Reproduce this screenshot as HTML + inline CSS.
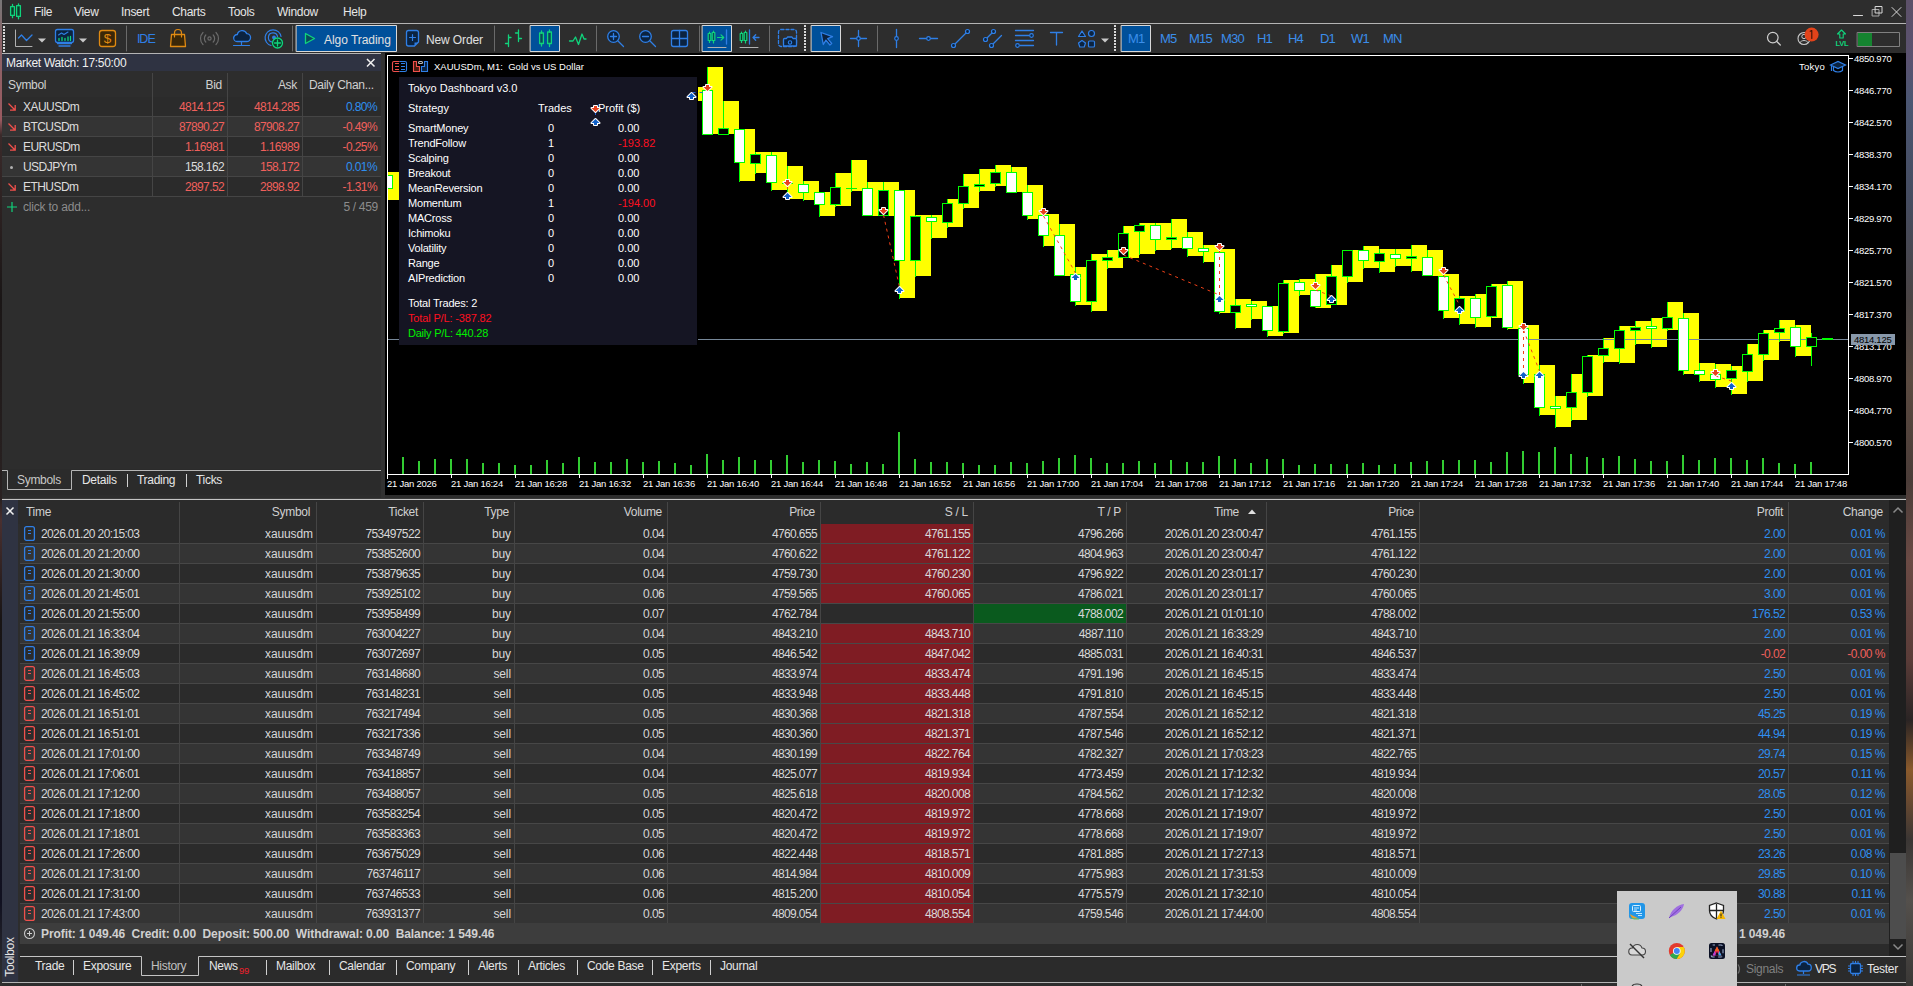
<!DOCTYPE html><html><head><meta charset="utf-8"><title>MT5</title><style>
*{box-sizing:border-box;margin:0;padding:0}
html,body{width:1913px;height:986px;overflow:hidden;background:#2d2d2d}
body{position:relative;font-family:"Liberation Sans",sans-serif;font-size:12px;color:#dcdcdc;line-height:14px}
.a{position:absolute}
.t{position:absolute;white-space:nowrap;line-height:14px;height:14px;letter-spacing:-0.45px}
.r{text-align:right}
svg{position:absolute;overflow:visible}
.blue{color:#3b8eea}
.red{color:#f05a5a}
</style></head><body>
<div class="a" style="left:0;top:0;width:2px;height:986px;background:linear-gradient(#777 0,#8a6468 40px,#9a5a60 120px,#3a2a2a 135px,#1a1616 300px,#2a2222 500px,#4a3030 520px,#181414 620px,#101020 900px,#303030 986px)"></div>
<div class="a" style="left:1906px;top:0;width:7px;height:986px;background:linear-gradient(#5c5068 0,#5a5270 60px,#4b5672 100px,#454c60 200px,#4a4444 300px,#5a4a40 380px,#4a3c38 480px,#6a4a44 560px,#5a3c38 660px,#2a2424 720px,#8a5a2c 770px,#6a4a30 800px,#3a3634 840px,#54504c 900px,#3a3836 986px)"></div>
<div class="a" style="left:2px;top:0px;width:1904px;height:23px;background:#2d2d2d;"></div>
<div class="a" style="left:2px;top:23px;width:1904px;height:1px;background:#b4b4b4;"></div>
<div class="a" style="left:2px;top:24px;width:1904px;height:29px;background:#2d2d2d;"></div>
<div class="a" style="left:2px;top:53px;width:379px;height:1px;background:#b4b4b4;"></div>
<div class="a" style="left:381px;top:53px;width:4px;height:1px;background:#323232;"></div>
<div class="t " style="left:34px;top:5px;color:#e6e6e6;font-size:12px;letter-spacing:-0.3px">File</div>
<div class="t " style="left:74px;top:5px;color:#e6e6e6;font-size:12px;letter-spacing:-0.3px">View</div>
<div class="t " style="left:121px;top:5px;color:#e6e6e6;font-size:12px;letter-spacing:-0.3px">Insert</div>
<div class="t " style="left:172px;top:5px;color:#e6e6e6;font-size:12px;letter-spacing:-0.3px">Charts</div>
<div class="t " style="left:228px;top:5px;color:#e6e6e6;font-size:12px;letter-spacing:-0.3px">Tools</div>
<div class="t " style="left:277px;top:5px;color:#e6e6e6;font-size:12px;letter-spacing:-0.3px">Window</div>
<div class="t " style="left:343px;top:5px;color:#e6e6e6;font-size:12px;letter-spacing:-0.3px">Help</div>
<svg width="1913" height="56" viewBox="0 0 1913 56" style="left:0;top:0" fill="none" stroke-linecap="round" stroke-linejoin="round"><g stroke="#10d47c" stroke-width="1.3"><rect x="10.6" y="6.6" width="3.8" height="8.8" fill="#0c3a28"/><path d="M12.5 4.5v2M12.5 15.5v2.2"/><rect x="16.6" y="5.6" width="3.8" height="10.8" fill="#0c3a28"/><path d="M18.5 3.8v1.8M18.5 16.5v2.3"/></g><g stroke="#d8d8d8" stroke-width="1"><path d="M1853.5 15.5h9"/><rect x="1872.5" y="9.5" width="6.5" height="6.5" stroke="#a8a8a8"/><rect x="1875.5" y="6.5" width="6.5" height="6.5"/><path d="M1892 7.5l9 9M1901 7.5l-9 9"/></g><rect x="3" y="26" width="2" height="2" fill="#d8d8d8" stroke="none" shape-rendering="crispEdges"/><rect x="3" y="29" width="2" height="2" fill="#d8d8d8" stroke="none" shape-rendering="crispEdges"/><rect x="3" y="32" width="2" height="2" fill="#d8d8d8" stroke="none" shape-rendering="crispEdges"/><rect x="3" y="35" width="2" height="2" fill="#d8d8d8" stroke="none" shape-rendering="crispEdges"/><rect x="3" y="38" width="2" height="2" fill="#d8d8d8" stroke="none" shape-rendering="crispEdges"/><rect x="3" y="41" width="2" height="2" fill="#d8d8d8" stroke="none" shape-rendering="crispEdges"/><rect x="3" y="44" width="2" height="2" fill="#d8d8d8" stroke="none" shape-rendering="crispEdges"/><rect x="3" y="47" width="2" height="2" fill="#d8d8d8" stroke="none" shape-rendering="crispEdges"/><rect x="3" y="50" width="2" height="2" fill="#d8d8d8" stroke="none" shape-rendering="crispEdges"/><rect x="804" y="25" width="2" height="2" fill="#d8d8d8" stroke="none" shape-rendering="crispEdges"/><rect x="804" y="28" width="2" height="2" fill="#d8d8d8" stroke="none" shape-rendering="crispEdges"/><rect x="804" y="31" width="2" height="2" fill="#d8d8d8" stroke="none" shape-rendering="crispEdges"/><rect x="804" y="34" width="2" height="2" fill="#d8d8d8" stroke="none" shape-rendering="crispEdges"/><rect x="804" y="37" width="2" height="2" fill="#d8d8d8" stroke="none" shape-rendering="crispEdges"/><rect x="804" y="40" width="2" height="2" fill="#d8d8d8" stroke="none" shape-rendering="crispEdges"/><rect x="804" y="43" width="2" height="2" fill="#d8d8d8" stroke="none" shape-rendering="crispEdges"/><rect x="804" y="46" width="2" height="2" fill="#d8d8d8" stroke="none" shape-rendering="crispEdges"/><rect x="804" y="49" width="2" height="2" fill="#d8d8d8" stroke="none" shape-rendering="crispEdges"/><rect x="1114" y="25" width="2" height="2" fill="#d8d8d8" stroke="none" shape-rendering="crispEdges"/><rect x="1114" y="28" width="2" height="2" fill="#d8d8d8" stroke="none" shape-rendering="crispEdges"/><rect x="1114" y="31" width="2" height="2" fill="#d8d8d8" stroke="none" shape-rendering="crispEdges"/><rect x="1114" y="34" width="2" height="2" fill="#d8d8d8" stroke="none" shape-rendering="crispEdges"/><rect x="1114" y="37" width="2" height="2" fill="#d8d8d8" stroke="none" shape-rendering="crispEdges"/><rect x="1114" y="40" width="2" height="2" fill="#d8d8d8" stroke="none" shape-rendering="crispEdges"/><rect x="1114" y="43" width="2" height="2" fill="#d8d8d8" stroke="none" shape-rendering="crispEdges"/><rect x="1114" y="46" width="2" height="2" fill="#d8d8d8" stroke="none" shape-rendering="crispEdges"/><rect x="1114" y="49" width="2" height="2" fill="#d8d8d8" stroke="none" shape-rendering="crispEdges"/><path d="M126.5 26v25" stroke="#6a6a6a" stroke-width="1"/><path d="M292.5 26v25" stroke="#6a6a6a" stroke-width="1"/><path d="M494.5 26v25" stroke="#6a6a6a" stroke-width="1"/><path d="M596.5 26v25" stroke="#6a6a6a" stroke-width="1"/><path d="M699.5 26v25" stroke="#6a6a6a" stroke-width="1"/><path d="M769.5 26v25" stroke="#6a6a6a" stroke-width="1"/><path d="M877.5 26v25" stroke="#6a6a6a" stroke-width="1"/><path d="M15.5 30v16.5h16.5" stroke="#b0b0b0" stroke-width="1"/><path d="M18.5 38l3-3 5 5.5 5.5-5.5" stroke="#2f7fe6" stroke-width="1.3"/><path d="M38 38.5h8l-4 4z" fill="#c8c8c8" stroke="none"/><rect x="55.5" y="29.5" width="18" height="13" rx="2" stroke="#2f7fe6" stroke-width="1.3" fill="#0b2340"/><path d="M57.5 43.5h14M59 46h11" stroke="#2f7fe6" stroke-width="1.3"/><path d="M58.5 35l3-2 2.500 1.500 4-2.500" stroke="#2f7fe6" stroke-width="1.1"/><path d="M59 40.500v-2M62 40.500v-3M65 40.500v-2M68 40.500v-3.500M70.500 40.500v-4" stroke="#10d47c" stroke-width="1.3"/><path d="M79 38.500h8l-4 4z" fill="#c8c8c8" stroke="none"/><rect x="99.500" y="30.500" width="16" height="16" rx="2.500" stroke="#e08a12" stroke-width="1.3" fill="#3a2708"/><text x="107.500" y="43.300" font-family="Liberation Sans" font-size="13.500" fill="#e08a12" stroke="none" text-anchor="middle">$</text><text x="145.800" y="43" font-family="Liberation Sans" font-size="12.500" fill="#2f7fe6" stroke="none" text-anchor="middle" letter-spacing="-1">IDE</text><path d="M171.500 34.500h13l1 12h-15z" stroke="#e08a12" stroke-width="1.3" fill="#3a2708"/><path d="M174.500 37v-4a3.500 3.500 0 0 1 7 0v4" stroke="#e08a12" stroke-width="1.2"/><g stroke="#6a6a6a" stroke-width="1.2"><circle cx="209.500" cy="38.500" r="1.600"/><path d="M205.800 35a5 5 0 0 0 0 7M213.200 35a5 5 0 0 1 0 7M203 32.500a8.500 8.500 0 0 0 0 12M216 32.500a8.500 8.500 0 0 1 0 12"/></g><path d="M237 41.500a3.500 3.500 0 0 1 .3-7a5 5 0 0 1 9.500-.8a3.900 3.900 0 0 1-.3 7.800z" stroke="#2f7fe6" stroke-width="1.3" fill="#0b2340"/><path d="M241.500 41.500v3M233.500 45.500h16" stroke="#2f7fe6" stroke-width="1.2"/><g stroke="#2f7fe6" stroke-width="1.2"><path d="M271 45.500a8 8 0 1 1 10-9"/><path d="M272 42a4.600 4.600 0 1 1 5.500-5.500"/><circle cx="274" cy="37.500" r="1.300" fill="#2f7fe6"/></g><circle cx="277.500" cy="43" r="5" fill="#0c3a28" stroke="#10d47c" stroke-width="1.3"/><path d="M277.500 40v6M274.500 43h6" stroke="#10d47c" stroke-width="1.3"/><rect x="296.500" y="25.500" width="100" height="26" fill="#00509a" stroke="#d8d8d8" stroke-width="1"/><path d="M305.500 33.500l9 5-9 5z" stroke="#10d47c" stroke-width="1.3" fill="#0a4a5a"/><path d="M408.500 30.500h8a2 2 0 0 1 2 2v9.500l-4 4h-6a2 2 0 0 1-2-2v-11.500a2 2 0 0 1 2-2z" stroke="#2f7fe6" stroke-width="1.3" fill="#0b2340"/><path d="M412.500 34.500v6M409.500 37.500h6" stroke="#2f7fe6" stroke-width="1.2"/><path d="M418 42.500l-3.500 3.500v-3.500z" fill="#2f7fe6" stroke="none"/><path d="M508.500 35v11.500M505.500 43.500h3M508.500 37.500h2.500M518.500 30v11.500M515.500 33h3M518.500 38.500h3" stroke="#10d47c" stroke-width="1.3"/><rect x="530.500" y="25.500" width="29" height="26" fill="#00509a" stroke="#d8d8d8" stroke-width="1"/><g stroke="#10d47c" stroke-width="1.3"><rect x="539.600" y="33" width="3.800" height="10.500" fill="#0a4a5a"/><path d="M541.500 31v2M541.500 43.500v2.500"/><rect x="547.600" y="32" width="3.800" height="11.500" fill="#0a4a5a"/><path d="M549.500 30v2M549.500 43.500v3"/></g><path d="M569.500 41h3.500l2.500-4 3 7.500 3.500-10.500 2 5h2" stroke="#10d47c" stroke-width="1.3"/><g stroke="#2f7fe6" stroke-width="1.3"><circle cx="613.500" cy="36.500" r="5.800" fill="#0b2340"/><path d="M618 41l5.500 5.500M610.500 36.500h6M613.500 33.500v6"/></g><g stroke="#2f7fe6" stroke-width="1.3"><circle cx="645.500" cy="36.500" r="5.800" fill="#0b2340"/><path d="M650 41l5.500 5.500M642.500 36.500h6"/></g><g stroke="#2f7fe6" stroke-width="1.3"><rect x="671.500" y="30.500" width="16" height="16" rx="2" fill="#0b2340"/><path d="M679.500 30.500v16M671.500 38.500h16"/></g><rect x="702.500" y="25.500" width="29" height="26" fill="#00509a" stroke="#d8d8d8" stroke-width="1"/><g stroke="#10d47c" stroke-width="1.2"><rect x="708.200" y="33.500" width="2.600" height="7" fill="#0a4a5a"/><path d="M709.500 32v1.500M709.500 40.500v2"/><rect x="712.200" y="32.500" width="2.600" height="8" fill="#0a4a5a"/><path d="M713.500 31v1.500M713.500 40.500v2.500"/><path d="M717.500 37.500h6M721 34.800l2.700 2.700-2.700 2.700"/></g><path d="M726.500 30v14" stroke="#2f7fe6" stroke-width="1.3"/><path d="M708 47.500h18" stroke="#b0b0b0" stroke-width="1"/><g stroke="#10d47c" stroke-width="1.2"><rect x="740.200" y="33.500" width="2.600" height="7" fill="#0c3a28"/><path d="M741.500 32v1.500M741.500 40.500v2"/><rect x="744.200" y="32.500" width="2.600" height="8" fill="#0c3a28"/><path d="M745.500 31v1.500M745.500 40.500v2.500"/></g><path d="M749.500 30v14M753 37.500h6M755.700 34.800l-2.700 2.700 2.700 2.700" stroke="#2f7fe6" stroke-width="1.3"/><path d="M740 47.500h18" stroke="#b0b0b0" stroke-width="1"/><rect x="778.500" y="29.500" width="18" height="17" rx="2.500" stroke="#2f7fe6" stroke-width="1.3" stroke-dasharray="3 2"/><path d="M784.500 38.500h2l1-1.500h4.500l1 1.500h2.500a1 1 0 0 1 1 1v6.500h-13v-6.500a1 1 0 0 1 1-1z" stroke="#2f7fe6" stroke-width="1.3" fill="#0b2340"/><circle cx="790" cy="42.500" r="1.700" stroke="#2f7fe6" stroke-width="1.1"/><rect x="811.500" y="25.500" width="29" height="26" fill="#00509a" stroke="#d8d8d8" stroke-width="1"/><path d="M821 32.500l11.500 4.200-4.800 2 4 4.800-1.800 1.500-4-4.800-2.600 4.300z" stroke="#2f7fe6" stroke-width="1.3" fill="#0b2340"/><path d="M858.500 30.500v16M850.500 38.500h16" stroke="#2f7fe6" stroke-width="1.3"/><circle cx="858.500" cy="38.500" r="1.800" stroke="#2f7fe6" stroke-width="1.2" fill="#0b2340"/><path d="M896.500 29.500v18" stroke="#2f7fe6" stroke-width="1.3"/><circle cx="896.500" cy="38.500" r="1.800" stroke="#2f7fe6" stroke-width="1.2" fill="#0b2340"/><path d="M919.500 38.500h18" stroke="#2f7fe6" stroke-width="1.3"/><circle cx="928.500" cy="38.500" r="1.800" stroke="#2f7fe6" stroke-width="1.2" fill="#0b2340"/><path d="M954.500 44.500l12.500-12.500" stroke="#2f7fe6" stroke-width="1.3"/><circle cx="953.500" cy="45.500" r="2" stroke="#2f7fe6" stroke-width="1.2" fill="#0b2340"/><circle cx="967.500" cy="31.500" r="2" stroke="#2f7fe6" stroke-width="1.2" fill="#0b2340"/><path d="M986.500 38.500l6.500-6.500M992.500 44.500l9-9" stroke="#2f7fe6" stroke-width="1.3"/><circle cx="985.500" cy="39.500" r="2" stroke="#2f7fe6" stroke-width="1.2" fill="#0b2340"/><circle cx="993.500" cy="31.500" r="2" stroke="#2f7fe6" stroke-width="1.2" fill="#0b2340"/><circle cx="991.500" cy="45.500" r="2" stroke="#2f7fe6" stroke-width="1.2" fill="#0b2340"/><path d="M1015.500 30.500h18M1015.500 35.500h14M1015.500 40.500h18M1020 45.500h13.500" stroke="#2f7fe6" stroke-width="1.3"/><circle cx="1031.500" cy="35.500" r="1.800" stroke="#2f7fe6" stroke-width="1.2" fill="#0b2340"/><circle cx="1017.500" cy="45.500" r="1.800" stroke="#2f7fe6" stroke-width="1.2" fill="#0b2340"/><path d="M1050.500 32.500h12M1056.500 32.500v12.500" stroke="#2f7fe6" stroke-width="1.3"/><g stroke="#2f7fe6" stroke-width="1.2" fill="#0b2340"><path d="M1082 31l3.500 5.500h-7z"/><circle cx="1091.500" cy="33.500" r="3"/><path d="M1082 40.500l3.500 2.500-1.300 4h-4.400l-1.300-4z"/><rect x="1088.500" y="41" width="6" height="6" rx="1"/></g><path d="M1101 38.500h8l-4 4z" fill="#c8c8c8" stroke="none"/><rect x="1121.500" y="25.500" width="29" height="26" fill="#00509a" stroke="#d8d8d8" stroke-width="1"/><circle cx="1772.800" cy="37.600" r="5.300" stroke="#d0d0d0" stroke-width="1.2"/><path d="M1776.800 41.500l3.500 3.500" stroke="#d0d0d0" stroke-width="1.2"/><circle cx="1804" cy="38.500" r="6" stroke="#c8c8c8" stroke-width="1.1"/><circle cx="1804" cy="36.500" r="2.200" stroke="#c8c8c8" stroke-width="1"/><path d="M1799.800 42.600a5 5 0 0 1 8.400 0" stroke="#c8c8c8" stroke-width="1"/><circle cx="1811.600" cy="34.600" r="7" fill="#e2431a" stroke="none"/><path d="M1810.200 31.300l1.600-.8v8" stroke="#3a1408" stroke-width="1.1"/><path d="M1841.500 30l4 4h-2.300v4h-3.400v-4h-2.300z" stroke="#10d47c" stroke-width="1.1"/><text x="1842" y="46.300" font-family="Liberation Sans" font-size="7.500" font-weight="bold" fill="#10d47c" stroke="none" text-anchor="middle" letter-spacing="-0.2">LVL</text><rect x="1857.500" y="32.500" width="42" height="14" stroke="#808080" stroke-width="1" fill="#2d2d2d"/><rect x="1858" y="33" width="14" height="13" fill="#158430" stroke="none"/></svg>
<div class="t " style="left:324px;top:33px;color:#e0e0e0;font-size:12px;letter-spacing:-0.05px">Algo Trading</div>
<div class="t " style="left:426px;top:33px;color:#e0e0e0;font-size:12px;letter-spacing:-0.12px">New Order</div>
<div class="t " style="left:1128px;top:32px;color:#3b8eea;font-size:13px;letter-spacing:-0.8px">M1</div>
<div class="t " style="left:1160px;top:32px;color:#3b8eea;font-size:13px;letter-spacing:-0.8px">M5</div>
<div class="t " style="left:1189px;top:32px;color:#3b8eea;font-size:13px;letter-spacing:-0.8px">M15</div>
<div class="t " style="left:1221px;top:32px;color:#3b8eea;font-size:13px;letter-spacing:-0.8px">M30</div>
<div class="t " style="left:1257px;top:32px;color:#3b8eea;font-size:13px;letter-spacing:-0.8px">H1</div>
<div class="t " style="left:1288px;top:32px;color:#3b8eea;font-size:13px;letter-spacing:-0.8px">H4</div>
<div class="t " style="left:1320px;top:32px;color:#3b8eea;font-size:13px;letter-spacing:-0.8px">D1</div>
<div class="t " style="left:1351px;top:32px;color:#3b8eea;font-size:13px;letter-spacing:-0.8px">W1</div>
<div class="t " style="left:1383px;top:32px;color:#3b8eea;font-size:13px;letter-spacing:-0.8px">MN</div>
<div class="a" style="left:2px;top:54px;width:379px;height:17px;background:#2f3342;"></div>
<div class="t " style="left:6px;top:56px;color:#f0f0f0;font-size:12px;letter-spacing:-0.3px">Market Watch: 17:50:00</div>
<svg width="12" height="12" style="left:365px;top:57px" viewBox="0 0 12 12"><path d="M2 2l7.500 7.500M9.500 2l-7.500 7.500" stroke="#f0f0f0" stroke-width="1.500" fill="none"/></svg>
<div class="a" style="left:2px;top:71px;width:379px;height:398px;background:#2d2d2d;"></div>
<div class="a" style="left:381px;top:54px;width:4px;height:445px;background:#323232;"></div>
<div class="t " style="left:8px;top:78px;color:#d0d0d0;font-size:12px;letter-spacing:-0.3px">Symbol</div>
<div class="t r " style="left:-78px;width:300px;top:78px;color:#d0d0d0;font-size:12px;letter-spacing:-0.3px">Bid</div>
<div class="t r " style="left:-3px;width:300px;top:78px;color:#d0d0d0;font-size:12px;letter-spacing:-0.3px">Ask</div>
<div class="t " style="left:309px;top:78px;color:#d0d0d0;font-size:12px;letter-spacing:-0.3px">Daily Chan...</div>
<div class="a" style="left:2px;top:97px;width:379px;height:19px;background:#2b2b2b;"></div>
<div class="a" style="left:2px;top:116px;width:379px;height:1px;background:#454545;"></div>
<svg width="10" height="10" style="left:7px;top:102px" viewBox="0 0 10 10"><path d="M1.500 1.500l6.500 6.500M8.200 3v5.200h-5.200" stroke="#f0504c" stroke-width="1.300" fill="none"/></svg>
<div class="t " style="left:23px;top:100px;color:#dcdcdc;font-size:12px;letter-spacing:-0.55px">XAUUSDm</div>
<div class="t r " style="left:-76px;width:300px;top:100px;color:#f0605c;font-size:12px;letter-spacing:-0.62px">4814.125</div>
<div class="t r " style="left:-1px;width:300px;top:100px;color:#f0605c;font-size:12px;letter-spacing:-0.62px">4814.285</div>
<div class="t r " style="left:77px;width:300px;top:100px;color:#2f8ff0;font-size:12px;letter-spacing:-0.6px">0.80%</div>
<div class="a" style="left:2px;top:117px;width:379px;height:19px;background:#343434;"></div>
<div class="a" style="left:2px;top:136px;width:379px;height:1px;background:#454545;"></div>
<svg width="10" height="10" style="left:7px;top:122px" viewBox="0 0 10 10"><path d="M1.500 1.500l6.500 6.500M8.200 3v5.200h-5.200" stroke="#f0504c" stroke-width="1.300" fill="none"/></svg>
<div class="t " style="left:23px;top:120px;color:#dcdcdc;font-size:12px;letter-spacing:-0.55px">BTCUSDm</div>
<div class="t r " style="left:-76px;width:300px;top:120px;color:#f0605c;font-size:12px;letter-spacing:-0.62px">87890.27</div>
<div class="t r " style="left:-1px;width:300px;top:120px;color:#f0605c;font-size:12px;letter-spacing:-0.62px">87908.27</div>
<div class="t r " style="left:77px;width:300px;top:120px;color:#f0605c;font-size:12px;letter-spacing:-0.6px">-0.49%</div>
<div class="a" style="left:2px;top:137px;width:379px;height:19px;background:#2b2b2b;"></div>
<div class="a" style="left:2px;top:156px;width:379px;height:1px;background:#454545;"></div>
<svg width="10" height="10" style="left:7px;top:142px" viewBox="0 0 10 10"><path d="M1.500 1.500l6.500 6.500M8.200 3v5.200h-5.200" stroke="#f0504c" stroke-width="1.300" fill="none"/></svg>
<div class="t " style="left:23px;top:140px;color:#dcdcdc;font-size:12px;letter-spacing:-0.55px">EURUSDm</div>
<div class="t r " style="left:-76px;width:300px;top:140px;color:#f0605c;font-size:12px;letter-spacing:-0.62px">1.16981</div>
<div class="t r " style="left:-1px;width:300px;top:140px;color:#f0605c;font-size:12px;letter-spacing:-0.62px">1.16989</div>
<div class="t r " style="left:77px;width:300px;top:140px;color:#f0605c;font-size:12px;letter-spacing:-0.6px">-0.25%</div>
<div class="a" style="left:2px;top:157px;width:379px;height:19px;background:#343434;"></div>
<div class="a" style="left:2px;top:176px;width:379px;height:1px;background:#454545;"></div>
<div class="a" style="left:10px;top:166px;width:3px;height:3px;background:#b0b0b0;border-radius:2px"></div>
<div class="t " style="left:23px;top:160px;color:#dcdcdc;font-size:12px;letter-spacing:-0.55px">USDJPYm</div>
<div class="t r " style="left:-76px;width:300px;top:160px;color:#dcdcdc;font-size:12px;letter-spacing:-0.62px">158.162</div>
<div class="t r " style="left:-1px;width:300px;top:160px;color:#f0605c;font-size:12px;letter-spacing:-0.62px">158.172</div>
<div class="t r " style="left:77px;width:300px;top:160px;color:#2f8ff0;font-size:12px;letter-spacing:-0.6px">0.01%</div>
<div class="a" style="left:2px;top:177px;width:379px;height:19px;background:#2b2b2b;"></div>
<div class="a" style="left:2px;top:196px;width:379px;height:1px;background:#454545;"></div>
<svg width="10" height="10" style="left:7px;top:182px" viewBox="0 0 10 10"><path d="M1.500 1.500l6.500 6.500M8.200 3v5.200h-5.200" stroke="#f0504c" stroke-width="1.300" fill="none"/></svg>
<div class="t " style="left:23px;top:180px;color:#dcdcdc;font-size:12px;letter-spacing:-0.55px">ETHUSDm</div>
<div class="t r " style="left:-76px;width:300px;top:180px;color:#f0605c;font-size:12px;letter-spacing:-0.62px">2897.52</div>
<div class="t r " style="left:-1px;width:300px;top:180px;color:#f0605c;font-size:12px;letter-spacing:-0.62px">2898.92</div>
<div class="t r " style="left:77px;width:300px;top:180px;color:#f0605c;font-size:12px;letter-spacing:-0.6px">-1.31%</div>
<div class="a" style="left:152px;top:73px;width:1px;height:124px;background:#454545;"></div>
<div class="a" style="left:227px;top:73px;width:1px;height:124px;background:#454545;"></div>
<div class="a" style="left:302px;top:73px;width:1px;height:124px;background:#454545;"></div>
<svg width="12" height="12" style="left:6px;top:201px" viewBox="0 0 12 12"><path d="M6 1v10M1 6h10" stroke="#10d47c" stroke-width="1.200" fill="none"/></svg>
<div class="t " style="left:23px;top:200px;color:#8c8c8c;font-size:12px;letter-spacing:-0.2px">click to add...</div>
<div class="t r " style="left:78px;width:300px;top:200px;color:#8c8c8c;font-size:12px;letter-spacing:-0.3px">5 / 459</div>
<div class="a" style="left:2px;top:469px;width:379px;height:26px;background:#2b2b2b;"></div>
<svg width="400" height="30" style="left:0;top:465px" viewBox="0 465 400 30" fill="none"><path d="M2 470.500h5.500v19h64v-19h309.500" stroke="#b4b4b4" stroke-width="1"/><path d="M127.500 474v13M186.500 474v13" stroke="#d0d0d0" stroke-width="1"/></svg>
<div class="t " style="left:17px;top:473px;color:#c8c8c8;font-size:12px;letter-spacing:-0.3px">Symbols</div>
<div class="t " style="left:82px;top:473px;color:#e6e6e6;font-size:12px;letter-spacing:-0.3px">Details</div>
<div class="t " style="left:137px;top:473px;color:#e6e6e6;font-size:12px;letter-spacing:-0.3px">Trading</div>
<div class="t " style="left:196px;top:473px;color:#e6e6e6;font-size:12px;letter-spacing:-0.3px">Ticks</div>
<div class="a" style="left:385px;top:53px;width:1521px;height:442px;background:#000;"></div>
<svg width="1913" height="500" style="left:0;top:0" viewBox="0 0 1913 500" shape-rendering="crispEdges"><g fill="#ffff00"><rect x="388" y="172" width="11" height="28"/><rect x="698" y="87" width="9" height="14"/><rect x="707" y="67" width="16" height="67"/><rect x="723" y="101" width="16" height="33"/><rect x="739" y="129" width="16" height="52"/><rect x="755" y="152" width="16" height="21"/><rect x="771" y="152" width="16" height="38"/><rect x="787" y="166" width="16" height="33"/><rect x="803" y="181" width="16" height="19"/><rect x="819" y="192" width="16" height="24"/><rect x="835" y="173" width="16" height="33"/><rect x="851" y="160" width="16" height="31"/><rect x="867" y="182" width="16" height="34"/><rect x="883" y="182" width="16" height="34"/><rect x="899" y="190" width="16" height="108"/><rect x="915" y="215" width="16" height="61"/><rect x="931" y="215" width="16" height="23"/><rect x="947" y="199" width="16" height="28"/><rect x="963" y="174" width="16" height="34"/><rect x="979" y="169" width="16" height="22"/><rect x="995" y="165" width="16" height="21"/><rect x="1011" y="167" width="16" height="25"/><rect x="1027" y="185" width="16" height="34"/><rect x="1043" y="214" width="16" height="32"/><rect x="1059" y="224" width="16" height="52"/><rect x="1075" y="267" width="16" height="38"/><rect x="1091" y="254" width="16" height="57"/><rect x="1107" y="250" width="16" height="18"/><rect x="1123" y="226" width="16" height="32"/><rect x="1139" y="223" width="16" height="31"/><rect x="1155" y="223" width="16" height="27"/><rect x="1171" y="219" width="16" height="29"/><rect x="1187" y="232" width="16" height="24"/><rect x="1203" y="245" width="16" height="17"/><rect x="1219" y="249" width="16" height="64"/><rect x="1235" y="299" width="16" height="29"/><rect x="1251" y="301" width="16" height="18"/><rect x="1267" y="306" width="16" height="30"/><rect x="1283" y="280" width="16" height="53"/><rect x="1299" y="279" width="16" height="16"/><rect x="1315" y="274" width="16" height="34"/><rect x="1331" y="265" width="16" height="40"/><rect x="1347" y="250" width="16" height="32"/><rect x="1363" y="246" width="16" height="22"/><rect x="1379" y="249" width="16" height="23"/><rect x="1395" y="249" width="16" height="17"/><rect x="1411" y="245" width="16" height="26"/><rect x="1427" y="250" width="16" height="26"/><rect x="1443" y="274" width="16" height="44"/><rect x="1459" y="296" width="16" height="28"/><rect x="1475" y="294" width="16" height="33"/><rect x="1491" y="284" width="16" height="33.5"/><rect x="1507" y="281" width="16" height="48"/><rect x="1523" y="325" width="16" height="58"/><rect x="1539" y="365" width="16" height="50"/><rect x="1555" y="396" width="16" height="31"/><rect x="1571" y="374" width="16" height="46"/><rect x="1587" y="355" width="16" height="41"/><rect x="1603" y="338" width="16" height="24"/><rect x="1619" y="326" width="16" height="37"/><rect x="1635" y="321" width="16" height="23"/><rect x="1651" y="318" width="16" height="29"/><rect x="1667" y="302" width="16" height="28"/><rect x="1683" y="313" width="16" height="61"/><rect x="1699" y="363" width="16" height="18"/><rect x="1715" y="364" width="16" height="23"/><rect x="1731" y="366" width="16" height="28"/><rect x="1747" y="344" width="16" height="37"/><rect x="1763" y="330" width="16" height="30"/><rect x="1779" y="320" width="16" height="21"/><rect x="1795" y="325" width="16" height="31"/></g><rect x="388" y="339" width="1460" height="1" fill="#778899"/><rect x="387.500" y="175.500" width="5" height="13" fill="#fff" stroke="#00ff00" stroke-width="1"/><rect x="707" y="67" width="1" height="67" fill="#00ff00"/><rect x="702.5" y="90.5" width="10" height="44" fill="#fff" stroke="#00ff00" stroke-width="1"/><rect x="723" y="101" width="1" height="33" fill="#00ff00"/><rect x="718.5" y="128.5" width="10" height="6" fill="#000" stroke="#00ff00" stroke-width="1"/><rect x="739" y="129" width="1" height="53" fill="#00ff00"/><rect x="734.5" y="129.5" width="10" height="33" fill="#fff" stroke="#00ff00" stroke-width="1"/><rect x="755" y="152" width="1" height="22" fill="#00ff00"/><rect x="750.5" y="154.5" width="10" height="9" fill="#000" stroke="#00ff00" stroke-width="1"/><rect x="771" y="152" width="1" height="39" fill="#00ff00"/><rect x="766.5" y="155.5" width="10" height="27" fill="#fff" stroke="#00ff00" stroke-width="1"/><rect x="787" y="166" width="1" height="34" fill="#00ff00"/><rect x="782" y="183" width="11" height="1" fill="#00ff00"/><rect x="803" y="181" width="1" height="20" fill="#00ff00"/><rect x="798.5" y="184.5" width="10" height="8" fill="#fff" stroke="#00ff00" stroke-width="1"/><rect x="819" y="192" width="1" height="25" fill="#00ff00"/><rect x="814.5" y="192.5" width="10" height="12" fill="#fff" stroke="#00ff00" stroke-width="1"/><rect x="835" y="173" width="1" height="34" fill="#00ff00"/><rect x="830.5" y="187.5" width="10" height="17" fill="#000" stroke="#00ff00" stroke-width="1"/><rect x="851" y="160" width="1" height="32" fill="#00ff00"/><rect x="846" y="188" width="11" height="1" fill="#00ff00"/><rect x="867" y="182" width="1" height="34" fill="#00ff00"/><rect x="862.5" y="188.5" width="10" height="27" fill="#fff" stroke="#00ff00" stroke-width="1"/><rect x="883" y="182" width="1" height="34" fill="#00ff00"/><rect x="878.5" y="190.5" width="10" height="25" fill="#000" stroke="#00ff00" stroke-width="1"/><rect x="899" y="190" width="1" height="109" fill="#00ff00"/><rect x="894.5" y="190.5" width="10" height="70" fill="#fff" stroke="#00ff00" stroke-width="1"/><rect x="915" y="215" width="1" height="62" fill="#00ff00"/><rect x="910.5" y="216.5" width="10" height="44" fill="#000" stroke="#00ff00" stroke-width="1"/><rect x="931" y="215" width="1" height="24" fill="#00ff00"/><rect x="926.5" y="217.5" width="10" height="4" fill="#fff" stroke="#00ff00" stroke-width="1"/><rect x="947" y="199" width="1" height="29" fill="#00ff00"/><rect x="942.5" y="203.5" width="10" height="19" fill="#000" stroke="#00ff00" stroke-width="1"/><rect x="963" y="174" width="1" height="35" fill="#00ff00"/><rect x="958.5" y="186.5" width="10" height="17" fill="#000" stroke="#00ff00" stroke-width="1"/><rect x="979" y="169" width="1" height="23" fill="#00ff00"/><rect x="974.5" y="184.5" width="10" height="2" fill="#000" stroke="#00ff00" stroke-width="1"/><rect x="995" y="165" width="1" height="22" fill="#00ff00"/><rect x="990.5" y="172.5" width="10" height="11" fill="#000" stroke="#00ff00" stroke-width="1"/><rect x="1011" y="167" width="1" height="25" fill="#00ff00"/><rect x="1006.5" y="172.5" width="10" height="20" fill="#fff" stroke="#00ff00" stroke-width="1"/><rect x="1027" y="185" width="1" height="35" fill="#00ff00"/><rect x="1022.5" y="192.5" width="10" height="23" fill="#fff" stroke="#00ff00" stroke-width="1"/><rect x="1043" y="214" width="1" height="33" fill="#00ff00"/><rect x="1038.5" y="215.5" width="10" height="20" fill="#fff" stroke="#00ff00" stroke-width="1"/><rect x="1059" y="224" width="1" height="52" fill="#00ff00"/><rect x="1054.5" y="235.5" width="10" height="40" fill="#fff" stroke="#00ff00" stroke-width="1"/><rect x="1075" y="267" width="1" height="39" fill="#00ff00"/><rect x="1070.5" y="274.5" width="10" height="27" fill="#fff" stroke="#00ff00" stroke-width="1"/><rect x="1091" y="254" width="1" height="58" fill="#00ff00"/><rect x="1086.5" y="260.5" width="10" height="41" fill="#000" stroke="#00ff00" stroke-width="1"/><rect x="1107" y="250" width="1" height="19" fill="#00ff00"/><rect x="1102.5" y="257.5" width="10" height="3" fill="#000" stroke="#00ff00" stroke-width="1"/><rect x="1123" y="226" width="1" height="32" fill="#00ff00"/><rect x="1118.5" y="233.5" width="10" height="24" fill="#000" stroke="#00ff00" stroke-width="1"/><rect x="1139" y="223" width="1" height="32" fill="#00ff00"/><rect x="1134.5" y="225.5" width="10" height="6" fill="#000" stroke="#00ff00" stroke-width="1"/><rect x="1155" y="223" width="1" height="28" fill="#00ff00"/><rect x="1150.5" y="225.5" width="10" height="14" fill="#fff" stroke="#00ff00" stroke-width="1"/><rect x="1171" y="219" width="1" height="30" fill="#00ff00"/><rect x="1166.5" y="237.5" width="10" height="2" fill="#000" stroke="#00ff00" stroke-width="1"/><rect x="1187" y="232" width="1" height="25" fill="#00ff00"/><rect x="1182.5" y="237.5" width="10" height="11" fill="#fff" stroke="#00ff00" stroke-width="1"/><rect x="1203" y="245" width="1" height="18" fill="#00ff00"/><rect x="1198.5" y="248.5" width="10" height="3" fill="#fff" stroke="#00ff00" stroke-width="1"/><rect x="1219" y="249" width="1" height="65" fill="#00ff00"/><rect x="1214.5" y="252.5" width="10" height="59" fill="#fff" stroke="#00ff00" stroke-width="1"/><rect x="1235" y="299" width="1" height="30" fill="#00ff00"/><rect x="1230.5" y="305.5" width="10" height="7" fill="#000" stroke="#00ff00" stroke-width="1"/><rect x="1251" y="301" width="1" height="19" fill="#00ff00"/><rect x="1246.5" y="304.5" width="10" height="2" fill="#fff" stroke="#00ff00" stroke-width="1"/><rect x="1267" y="306" width="1" height="31" fill="#00ff00"/><rect x="1262.5" y="306.5" width="10" height="24" fill="#fff" stroke="#00ff00" stroke-width="1"/><rect x="1283" y="280" width="1" height="54" fill="#00ff00"/><rect x="1278.5" y="283.5" width="10" height="48" fill="#000" stroke="#00ff00" stroke-width="1"/><rect x="1299" y="279" width="1" height="17" fill="#00ff00"/><rect x="1294.5" y="282.5" width="10" height="8" fill="#fff" stroke="#00ff00" stroke-width="1"/><rect x="1315" y="274" width="1" height="34" fill="#00ff00"/><rect x="1310.5" y="290.5" width="10" height="16" fill="#fff" stroke="#00ff00" stroke-width="1"/><rect x="1331" y="265" width="1" height="40" fill="#00ff00"/><rect x="1326.5" y="276.5" width="10" height="28" fill="#000" stroke="#00ff00" stroke-width="1"/><rect x="1347" y="250" width="1" height="33" fill="#00ff00"/><rect x="1342.5" y="250.5" width="10" height="26" fill="#000" stroke="#00ff00" stroke-width="1"/><rect x="1363" y="246" width="1" height="23" fill="#00ff00"/><rect x="1358.5" y="250.5" width="10" height="10" fill="#fff" stroke="#00ff00" stroke-width="1"/><rect x="1379" y="249" width="1" height="24" fill="#00ff00"/><rect x="1374.5" y="253.5" width="10" height="8" fill="#000" stroke="#00ff00" stroke-width="1"/><rect x="1395" y="249" width="1" height="18" fill="#00ff00"/><rect x="1390.5" y="254.5" width="10" height="4" fill="#fff" stroke="#00ff00" stroke-width="1"/><rect x="1411" y="245" width="1" height="27" fill="#00ff00"/><rect x="1406.5" y="256.5" width="10" height="2" fill="#000" stroke="#00ff00" stroke-width="1"/><rect x="1427" y="250" width="1" height="26" fill="#00ff00"/><rect x="1422.5" y="257.5" width="10" height="18" fill="#fff" stroke="#00ff00" stroke-width="1"/><rect x="1443" y="274" width="1" height="45" fill="#00ff00"/><rect x="1438.5" y="276.5" width="10" height="34" fill="#fff" stroke="#00ff00" stroke-width="1"/><rect x="1459" y="296" width="1" height="29" fill="#00ff00"/><rect x="1454.5" y="298.5" width="10" height="12" fill="#000" stroke="#00ff00" stroke-width="1"/><rect x="1475" y="294" width="1" height="34" fill="#00ff00"/><rect x="1470.5" y="298.5" width="10" height="19" fill="#fff" stroke="#00ff00" stroke-width="1"/><rect x="1491" y="284" width="1" height="33.5" fill="#00ff00"/><rect x="1486.5" y="286.5" width="10" height="30" fill="#000" stroke="#00ff00" stroke-width="1"/><rect x="1507" y="281" width="1" height="49" fill="#00ff00"/><rect x="1502.5" y="285.5" width="10" height="42" fill="#fff" stroke="#00ff00" stroke-width="1"/><rect x="1523" y="325" width="1" height="59" fill="#00ff00"/><rect x="1518.5" y="328.5" width="10" height="46" fill="#fff" stroke="#00ff00" stroke-width="1"/><rect x="1539" y="365" width="1" height="51" fill="#00ff00"/><rect x="1534.5" y="374.5" width="10" height="33" fill="#fff" stroke="#00ff00" stroke-width="1"/><rect x="1555" y="396" width="1" height="32" fill="#00ff00"/><rect x="1550.5" y="406.5" width="10" height="2" fill="#fff" stroke="#00ff00" stroke-width="1"/><rect x="1571" y="374" width="1" height="47" fill="#00ff00"/><rect x="1566.5" y="392.5" width="10" height="15" fill="#000" stroke="#00ff00" stroke-width="1"/><rect x="1587" y="355" width="1" height="42" fill="#00ff00"/><rect x="1582.5" y="356.5" width="10" height="36" fill="#000" stroke="#00ff00" stroke-width="1"/><rect x="1603" y="338" width="1" height="25" fill="#00ff00"/><rect x="1598.5" y="348.5" width="10" height="7" fill="#000" stroke="#00ff00" stroke-width="1"/><rect x="1619" y="326" width="1" height="38" fill="#00ff00"/><rect x="1614.5" y="330.5" width="10" height="18" fill="#000" stroke="#00ff00" stroke-width="1"/><rect x="1635" y="321" width="1" height="24" fill="#00ff00"/><rect x="1630.5" y="327.5" width="10" height="3" fill="#000" stroke="#00ff00" stroke-width="1"/><rect x="1651" y="318" width="1" height="30" fill="#00ff00"/><rect x="1646.5" y="326.5" width="10" height="2" fill="#fff" stroke="#00ff00" stroke-width="1"/><rect x="1667" y="302" width="1" height="29" fill="#00ff00"/><rect x="1662.5" y="317.5" width="10" height="11" fill="#000" stroke="#00ff00" stroke-width="1"/><rect x="1683" y="313" width="1" height="62" fill="#00ff00"/><rect x="1678.5" y="318.5" width="10" height="52" fill="#fff" stroke="#00ff00" stroke-width="1"/><rect x="1699" y="363" width="1" height="19" fill="#00ff00"/><rect x="1694.5" y="370.5" width="10" height="4" fill="#fff" stroke="#00ff00" stroke-width="1"/><rect x="1715" y="364" width="1" height="24" fill="#00ff00"/><rect x="1710.5" y="374.5" width="10" height="5" fill="#fff" stroke="#00ff00" stroke-width="1"/><rect x="1731" y="366" width="1" height="29" fill="#00ff00"/><rect x="1726.5" y="370.5" width="10" height="8" fill="#000" stroke="#00ff00" stroke-width="1"/><rect x="1747" y="344" width="1" height="38" fill="#00ff00"/><rect x="1742.5" y="354.5" width="10" height="17" fill="#000" stroke="#00ff00" stroke-width="1"/><rect x="1763" y="330" width="1" height="31" fill="#00ff00"/><rect x="1758.5" y="333.5" width="10" height="21" fill="#000" stroke="#00ff00" stroke-width="1"/><rect x="1779" y="320" width="1" height="22" fill="#00ff00"/><rect x="1774.5" y="328.5" width="10" height="4" fill="#000" stroke="#00ff00" stroke-width="1"/><rect x="1795" y="325" width="1" height="32" fill="#00ff00"/><rect x="1790.5" y="327.5" width="10" height="19" fill="#fff" stroke="#00ff00" stroke-width="1"/><rect x="1811" y="333" width="1" height="33" fill="#00ff00"/><rect x="1806.5" y="337.5" width="10" height="9" fill="#000" stroke="#00ff00" stroke-width="1"/><rect x="1822" y="338" width="11" height="2" fill="#00ff00"/><rect x="402" y="457" width="2" height="17" fill="#32cd32"/><rect x="418" y="461" width="2" height="13" fill="#32cd32"/><rect x="434" y="459" width="2" height="15" fill="#32cd32"/><rect x="450" y="459" width="2" height="15" fill="#32cd32"/><rect x="466" y="459" width="2" height="15" fill="#32cd32"/><rect x="482" y="463" width="2" height="11" fill="#32cd32"/><rect x="498" y="463" width="2" height="11" fill="#32cd32"/><rect x="514" y="465" width="2" height="9" fill="#32cd32"/><rect x="530" y="465" width="2" height="9" fill="#32cd32"/><rect x="546" y="460" width="2" height="14" fill="#32cd32"/><rect x="562" y="463" width="2" height="11" fill="#32cd32"/><rect x="578" y="457" width="2" height="17" fill="#32cd32"/><rect x="594" y="462" width="2" height="12" fill="#32cd32"/><rect x="610" y="462" width="2" height="12" fill="#32cd32"/><rect x="626" y="459" width="2" height="15" fill="#32cd32"/><rect x="642" y="462" width="2" height="12" fill="#32cd32"/><rect x="658" y="461" width="2" height="13" fill="#32cd32"/><rect x="674" y="463" width="2" height="11" fill="#32cd32"/><rect x="690" y="465" width="2" height="9" fill="#32cd32"/><rect x="706" y="454" width="2" height="20" fill="#32cd32"/><rect x="722" y="460" width="2" height="14" fill="#32cd32"/><rect x="738" y="457" width="2" height="17" fill="#32cd32"/><rect x="754" y="460" width="2" height="14" fill="#32cd32"/><rect x="770" y="460" width="2" height="14" fill="#32cd32"/><rect x="786" y="455" width="2" height="19" fill="#32cd32"/><rect x="802" y="462" width="2" height="12" fill="#32cd32"/><rect x="818" y="460" width="2" height="14" fill="#32cd32"/><rect x="834" y="461" width="2" height="13" fill="#32cd32"/><rect x="850" y="464" width="2" height="10" fill="#32cd32"/><rect x="866" y="462" width="2" height="12" fill="#32cd32"/><rect x="882" y="464" width="2" height="10" fill="#32cd32"/><rect x="898" y="432" width="2" height="42" fill="#32cd32"/><rect x="914" y="459" width="2" height="15" fill="#32cd32"/><rect x="930" y="462" width="2" height="12" fill="#32cd32"/><rect x="946" y="462" width="2" height="12" fill="#32cd32"/><rect x="962" y="463" width="2" height="11" fill="#32cd32"/><rect x="978" y="465" width="2" height="9" fill="#32cd32"/><rect x="994" y="465" width="2" height="9" fill="#32cd32"/><rect x="1010" y="462" width="2" height="12" fill="#32cd32"/><rect x="1026" y="463" width="2" height="11" fill="#32cd32"/><rect x="1042" y="461" width="2" height="13" fill="#32cd32"/><rect x="1058" y="458" width="2" height="16" fill="#32cd32"/><rect x="1074" y="455" width="2" height="19" fill="#32cd32"/><rect x="1090" y="458" width="2" height="16" fill="#32cd32"/><rect x="1106" y="463" width="2" height="11" fill="#32cd32"/><rect x="1122" y="463" width="2" height="11" fill="#32cd32"/><rect x="1138" y="461" width="2" height="13" fill="#32cd32"/><rect x="1154" y="463" width="2" height="11" fill="#32cd32"/><rect x="1170" y="460" width="2" height="14" fill="#32cd32"/><rect x="1186" y="462" width="2" height="12" fill="#32cd32"/><rect x="1202" y="462" width="2" height="12" fill="#32cd32"/><rect x="1218" y="456" width="2" height="18" fill="#32cd32"/><rect x="1234" y="459" width="2" height="15" fill="#32cd32"/><rect x="1250" y="463" width="2" height="11" fill="#32cd32"/><rect x="1266" y="459" width="2" height="15" fill="#32cd32"/><rect x="1282" y="459" width="2" height="15" fill="#32cd32"/><rect x="1298" y="465" width="2" height="9" fill="#32cd32"/><rect x="1314" y="464" width="2" height="10" fill="#32cd32"/><rect x="1330" y="464" width="2" height="10" fill="#32cd32"/><rect x="1346" y="464" width="2" height="10" fill="#32cd32"/><rect x="1362" y="463" width="2" height="11" fill="#32cd32"/><rect x="1378" y="465" width="2" height="9" fill="#32cd32"/><rect x="1394" y="464" width="2" height="10" fill="#32cd32"/><rect x="1410" y="462" width="2" height="12" fill="#32cd32"/><rect x="1426" y="461" width="2" height="13" fill="#32cd32"/><rect x="1442" y="460" width="2" height="14" fill="#32cd32"/><rect x="1458" y="460" width="2" height="14" fill="#32cd32"/><rect x="1474" y="460" width="2" height="14" fill="#32cd32"/><rect x="1490" y="462" width="2" height="12" fill="#32cd32"/><rect x="1506" y="452" width="2" height="22" fill="#32cd32"/><rect x="1522" y="451" width="2" height="23" fill="#32cd32"/><rect x="1538" y="452" width="2" height="22" fill="#32cd32"/><rect x="1554" y="447" width="2" height="27" fill="#32cd32"/><rect x="1570" y="454" width="2" height="20" fill="#32cd32"/><rect x="1586" y="457" width="2" height="17" fill="#32cd32"/><rect x="1602" y="458" width="2" height="16" fill="#32cd32"/><rect x="1618" y="456" width="2" height="18" fill="#32cd32"/><rect x="1634" y="459" width="2" height="15" fill="#32cd32"/><rect x="1650" y="461" width="2" height="13" fill="#32cd32"/><rect x="1666" y="461" width="2" height="13" fill="#32cd32"/><rect x="1682" y="455" width="2" height="19" fill="#32cd32"/><rect x="1698" y="460" width="2" height="14" fill="#32cd32"/><rect x="1714" y="458" width="2" height="16" fill="#32cd32"/><rect x="1730" y="458" width="2" height="16" fill="#32cd32"/><rect x="1746" y="460" width="2" height="14" fill="#32cd32"/><rect x="1762" y="458" width="2" height="16" fill="#32cd32"/><rect x="1778" y="463" width="2" height="11" fill="#32cd32"/><rect x="1794" y="464" width="2" height="10" fill="#32cd32"/><rect x="1810" y="462" width="2" height="12" fill="#32cd32"/></svg>
<div class="a" style="left:399px;top:77px;width:298px;height:268px;background:#151523;"></div>
<div class="a" style="left:697px;top:77px;width:1px;height:268px;background:#000;"></div>
<div class="t " style="left:408px;top:81px;font-size:11px;letter-spacing:0;color:#fff">Tokyo Dashboard v3.0</div>
<div class="t " style="left:408px;top:101px;font-size:11px;letter-spacing:0;color:#fff">Strategy</div>
<div class="t " style="left:538px;top:101px;font-size:11px;letter-spacing:0;color:#fff">Trades</div>
<div class="t " style="left:598px;top:101px;font-size:11px;letter-spacing:0;color:#fff">Profit ($)</div>
<div class="t " style="left:408px;top:121px;font-size:11px;letter-spacing:-0.2px;color:#fff">SmartMoney</div>
<div class="t " style="left:548px;top:121px;font-size:11px;letter-spacing:0;color:#fff">0</div>
<div class="t " style="left:618px;top:121px;font-size:11px;letter-spacing:0;color:#fff">0.00</div>
<div class="t " style="left:408px;top:136px;font-size:11px;letter-spacing:-0.2px;color:#fff">TrendFollow</div>
<div class="t " style="left:548px;top:136px;font-size:11px;letter-spacing:0;color:#fff">1</div>
<div class="t " style="left:618px;top:136px;font-size:11px;letter-spacing:0;color:#ff1020">-193.82</div>
<div class="t " style="left:408px;top:151px;font-size:11px;letter-spacing:-0.2px;color:#fff">Scalping</div>
<div class="t " style="left:548px;top:151px;font-size:11px;letter-spacing:0;color:#fff">0</div>
<div class="t " style="left:618px;top:151px;font-size:11px;letter-spacing:0;color:#fff">0.00</div>
<div class="t " style="left:408px;top:166px;font-size:11px;letter-spacing:-0.2px;color:#fff">Breakout</div>
<div class="t " style="left:548px;top:166px;font-size:11px;letter-spacing:0;color:#fff">0</div>
<div class="t " style="left:618px;top:166px;font-size:11px;letter-spacing:0;color:#fff">0.00</div>
<div class="t " style="left:408px;top:181px;font-size:11px;letter-spacing:-0.2px;color:#fff">MeanReversion</div>
<div class="t " style="left:548px;top:181px;font-size:11px;letter-spacing:0;color:#fff">0</div>
<div class="t " style="left:618px;top:181px;font-size:11px;letter-spacing:0;color:#fff">0.00</div>
<div class="t " style="left:408px;top:196px;font-size:11px;letter-spacing:-0.2px;color:#fff">Momentum</div>
<div class="t " style="left:548px;top:196px;font-size:11px;letter-spacing:0;color:#fff">1</div>
<div class="t " style="left:618px;top:196px;font-size:11px;letter-spacing:0;color:#ff1020">-194.00</div>
<div class="t " style="left:408px;top:211px;font-size:11px;letter-spacing:-0.2px;color:#fff">MACross</div>
<div class="t " style="left:548px;top:211px;font-size:11px;letter-spacing:0;color:#fff">0</div>
<div class="t " style="left:618px;top:211px;font-size:11px;letter-spacing:0;color:#fff">0.00</div>
<div class="t " style="left:408px;top:226px;font-size:11px;letter-spacing:-0.2px;color:#fff">Ichimoku</div>
<div class="t " style="left:548px;top:226px;font-size:11px;letter-spacing:0;color:#fff">0</div>
<div class="t " style="left:618px;top:226px;font-size:11px;letter-spacing:0;color:#fff">0.00</div>
<div class="t " style="left:408px;top:241px;font-size:11px;letter-spacing:-0.2px;color:#fff">Volatility</div>
<div class="t " style="left:548px;top:241px;font-size:11px;letter-spacing:0;color:#fff">0</div>
<div class="t " style="left:618px;top:241px;font-size:11px;letter-spacing:0;color:#fff">0.00</div>
<div class="t " style="left:408px;top:256px;font-size:11px;letter-spacing:-0.2px;color:#fff">Range</div>
<div class="t " style="left:548px;top:256px;font-size:11px;letter-spacing:0;color:#fff">0</div>
<div class="t " style="left:618px;top:256px;font-size:11px;letter-spacing:0;color:#fff">0.00</div>
<div class="t " style="left:408px;top:271px;font-size:11px;letter-spacing:-0.2px;color:#fff">AIPrediction</div>
<div class="t " style="left:548px;top:271px;font-size:11px;letter-spacing:0;color:#fff">0</div>
<div class="t " style="left:618px;top:271px;font-size:11px;letter-spacing:0;color:#fff">0.00</div>
<div class="t " style="left:408px;top:296px;font-size:11px;letter-spacing:-0.2px;color:#fff">Total Trades: 2</div>
<div class="t " style="left:408px;top:311px;font-size:11px;letter-spacing:-0.15px;color:#ff1020">Total P/L: -387.82</div>
<div class="t " style="left:408px;top:326px;font-size:11px;letter-spacing:-0.22px;color:#00f000">Daily P/L: 440.28</div>
<svg width="1913" height="500" style="left:0;top:0" viewBox="0 0 1913 500"><g shape-rendering="crispEdges" fill="#fff"><rect x="387" y="55" width="1462" height="1"/><rect x="387" y="55" width="1" height="424"/><rect x="1848" y="55" width="1" height="420"/><rect x="387" y="474" width="1462" height="1"/><rect x="1849" y="58" width="4" height="1"/><rect x="1849" y="90" width="4" height="1"/><rect x="1849" y="122" width="4" height="1"/><rect x="1849" y="154" width="4" height="1"/><rect x="1849" y="186" width="4" height="1"/><rect x="1849" y="218" width="4" height="1"/><rect x="1849" y="250" width="4" height="1"/><rect x="1849" y="282" width="4" height="1"/><rect x="1849" y="314" width="4" height="1"/><rect x="1849" y="346" width="4" height="1"/><rect x="1849" y="378" width="4" height="1"/><rect x="1849" y="410" width="4" height="1"/><rect x="1849" y="442" width="4" height="1"/><rect x="451" y="475" width="1" height="3"/><rect x="515" y="475" width="1" height="3"/><rect x="579" y="475" width="1" height="3"/><rect x="643" y="475" width="1" height="3"/><rect x="707" y="475" width="1" height="3"/><rect x="771" y="475" width="1" height="3"/><rect x="835" y="475" width="1" height="3"/><rect x="899" y="475" width="1" height="3"/><rect x="963" y="475" width="1" height="3"/><rect x="1027" y="475" width="1" height="3"/><rect x="1091" y="475" width="1" height="3"/><rect x="1155" y="475" width="1" height="3"/><rect x="1219" y="475" width="1" height="3"/><rect x="1283" y="475" width="1" height="3"/><rect x="1347" y="475" width="1" height="3"/><rect x="1411" y="475" width="1" height="3"/><rect x="1475" y="475" width="1" height="3"/><rect x="1539" y="475" width="1" height="3"/><rect x="1603" y="475" width="1" height="3"/><rect x="1667" y="475" width="1" height="3"/><rect x="1731" y="475" width="1" height="3"/><rect x="1795" y="475" width="1" height="3"/></g><path d="M692.5 92.5L706.5 92.5" stroke="#2060d0" stroke-width="1" stroke-dasharray="3 4" fill="none"/><path d="M595.5 112L595.5 117" stroke="#2060d0" stroke-width="1" stroke-dasharray="3 4" fill="none"/><path d="M787.5 186L787.5 192" stroke="#f04018" stroke-width="1" stroke-dasharray="3 4" fill="none"/><path d="M883.5 215L899.5 287" stroke="#f04018" stroke-width="1" stroke-dasharray="3 4" fill="none"/><path d="M1043.5 216L1075.5 273" stroke="#f04018" stroke-width="1" stroke-dasharray="3 4" fill="none"/><path d="M1123.5 255L1219.5 295" stroke="#f04018" stroke-width="1" stroke-dasharray="3 4" fill="none"/><path d="M1219.5 250L1219.5 295" stroke="#f04018" stroke-width="1" stroke-dasharray="3 4" fill="none"/><path d="M1315.5 290L1331.5 296" stroke="#f04018" stroke-width="1" stroke-dasharray="3 4" fill="none"/><path d="M1443.5 275L1459.5 305" stroke="#f04018" stroke-width="1" stroke-dasharray="3 4" fill="none"/><path d="M1523.5 330L1523.5 371" stroke="#f04018" stroke-width="1" stroke-dasharray="3 4" fill="none"/><path d="M1523.5 330L1539.5 371" stroke="#f04018" stroke-width="1" stroke-dasharray="3 4" fill="none"/><path d="M1715.5 376L1731.5 381" stroke="#f04018" stroke-width="1" stroke-dasharray="3 4" fill="none"/><path d="M690 99H693V97H695.5L691.5 93L687.5 97H690Z" fill="#1060c8" stroke="#fff" stroke-width="2" paint-order="stroke" stroke-linejoin="round"/><path d="M706 85H709V87H711.5L707.5 91L703.5 87H706Z" fill="#e8401c" stroke="#fff" stroke-width="2" paint-order="stroke" stroke-linejoin="round"/><path d="M594 106H597V108H599.5L595.5 112L591.5 108H594Z" fill="#e8401c" stroke="#fff" stroke-width="2" paint-order="stroke" stroke-linejoin="round"/><path d="M594 125H597V123H599.5L595.5 119L591.5 123H594Z" fill="#1060c8" stroke="#fff" stroke-width="2" paint-order="stroke" stroke-linejoin="round"/><path d="M786 180H789V182H791.5L787.5 186L783.5 182H786Z" fill="#e8401c" stroke="#fff" stroke-width="2" paint-order="stroke" stroke-linejoin="round"/><path d="M786 199H789V197H791.5L787.5 193L783.5 197H786Z" fill="#1060c8" stroke="#fff" stroke-width="2" paint-order="stroke" stroke-linejoin="round"/><path d="M882 208H885V210H887.5L883.5 214L879.5 210H882Z" fill="#e8401c" stroke="#fff" stroke-width="2" paint-order="stroke" stroke-linejoin="round"/><path d="M898 293H901V291H903.5L899.5 287L895.5 291H898Z" fill="#1060c8" stroke="#fff" stroke-width="2" paint-order="stroke" stroke-linejoin="round"/><path d="M1042 209H1045V211H1047.5L1043.5 215L1039.5 211H1042Z" fill="#e8401c" stroke="#fff" stroke-width="2" paint-order="stroke" stroke-linejoin="round"/><path d="M1074 280H1077V278H1079.5L1075.5 274L1071.5 278H1074Z" fill="#1060c8" stroke="#fff" stroke-width="2" paint-order="stroke" stroke-linejoin="round"/><path d="M1122 248H1125V250H1127.5L1123.5 254L1119.5 250H1122Z" fill="#e8401c" stroke="#fff" stroke-width="2" paint-order="stroke" stroke-linejoin="round"/><path d="M1218 302H1221V300H1223.5L1219.5 296L1215.5 300H1218Z" fill="#1060c8" stroke="#fff" stroke-width="2" paint-order="stroke" stroke-linejoin="round"/><path d="M1218 244H1221V246H1223.5L1219.5 250L1215.5 246H1218Z" fill="#e8401c" stroke="#fff" stroke-width="2" paint-order="stroke" stroke-linejoin="round"/><path d="M1314 283H1317V285H1319.5L1315.5 289L1311.5 285H1314Z" fill="#e8401c" stroke="#fff" stroke-width="2" paint-order="stroke" stroke-linejoin="round"/><path d="M1330 302H1333V300H1335.5L1331.5 296L1327.5 300H1330Z" fill="#1060c8" stroke="#fff" stroke-width="2" paint-order="stroke" stroke-linejoin="round"/><path d="M1442 268H1445V270H1447.5L1443.5 274L1439.5 270H1442Z" fill="#e8401c" stroke="#fff" stroke-width="2" paint-order="stroke" stroke-linejoin="round"/><path d="M1458 313H1461V311H1463.5L1459.5 307L1455.5 311H1458Z" fill="#1060c8" stroke="#fff" stroke-width="2" paint-order="stroke" stroke-linejoin="round"/><path d="M1522 324H1525V326H1527.5L1523.5 330L1519.5 326H1522Z" fill="#e8401c" stroke="#fff" stroke-width="2" paint-order="stroke" stroke-linejoin="round"/><path d="M1522 378H1525V376H1527.5L1523.5 372L1519.5 376H1522Z" fill="#1060c8" stroke="#fff" stroke-width="2" paint-order="stroke" stroke-linejoin="round"/><path d="M1538 378H1541V376H1543.5L1539.5 372L1535.5 376H1538Z" fill="#1060c8" stroke="#fff" stroke-width="2" paint-order="stroke" stroke-linejoin="round"/><path d="M1714 370H1717V372H1719.5L1715.5 376L1711.5 372H1714Z" fill="#e8401c" stroke="#fff" stroke-width="2" paint-order="stroke" stroke-linejoin="round"/><path d="M1730 389H1733V387H1735.5L1731.5 383L1727.5 387H1730Z" fill="#1060c8" stroke="#fff" stroke-width="2" paint-order="stroke" stroke-linejoin="round"/><g fill="none" stroke-width="1.100"><path d="M399.500 61.500h-5.500a1.500 1.500 0 0 0-1.500 1.500v7a1.500 1.500 0 0 0 1.500 1.500h5.500" stroke="#f0504c"/><path d="M399.500 61.500h5.500a1.500 1.500 0 0 1 1.500 1.500v7a1.500 1.500 0 0 1-1.500 1.500h-5.500" stroke="#2f7fe6"/><path d="M394.500 63.500h4M394.500 66.500h4M394.500 69.500h4" stroke="#f0504c" shape-rendering="crispEdges"/><path d="M400.500 63.500h4M400.500 66.500h4M400.500 69.500h4" stroke="#2f7fe6" shape-rendering="crispEdges"/><path d="M413.500 61.500h3v5h3v5h-6z" stroke="#f0504c" fill="#4a1c10"/><path d="M424.500 61.500h3v10h-6v-5h3z" stroke="#2f7fe6" fill="#0b2340"/><rect x="418.500" y="61.500" width="4" height="2" rx="1" stroke="#b8b8b8"/></g><g fill="none" stroke="#2f7fe6" stroke-width="1.200"><path d="M1830.500 65l7.500-3.500 7.500 3.500-7.500 3.500z" fill="#0b2340"/><path d="M1833.500 67v3.500c2.500 2 6.500 2 9 0v-3.500M1831.500 65.500v5.500"/></g></svg>
<div class="t " style="left:434px;top:60px;font-size:9.5px;letter-spacing:0.02px;color:#fff">XAUUSDm, M1:&nbsp; Gold vs US Dollar</div>
<div class="t " style="left:1799px;top:60px;font-size:9.5px;letter-spacing:0.24px;color:#fff">Tokyo</div>
<div class="t " style="left:1854px;top:52px;font-size:9.5px;letter-spacing:-0.28px;color:#fff">4850.970</div>
<div class="t " style="left:1854px;top:84px;font-size:9.5px;letter-spacing:-0.28px;color:#fff">4846.770</div>
<div class="t " style="left:1854px;top:116px;font-size:9.5px;letter-spacing:-0.28px;color:#fff">4842.570</div>
<div class="t " style="left:1854px;top:148px;font-size:9.5px;letter-spacing:-0.28px;color:#fff">4838.370</div>
<div class="t " style="left:1854px;top:180px;font-size:9.5px;letter-spacing:-0.28px;color:#fff">4834.170</div>
<div class="t " style="left:1854px;top:212px;font-size:9.5px;letter-spacing:-0.28px;color:#fff">4829.970</div>
<div class="t " style="left:1854px;top:244px;font-size:9.5px;letter-spacing:-0.28px;color:#fff">4825.770</div>
<div class="t " style="left:1854px;top:276px;font-size:9.5px;letter-spacing:-0.28px;color:#fff">4821.570</div>
<div class="t " style="left:1854px;top:308px;font-size:9.5px;letter-spacing:-0.28px;color:#fff">4817.370</div>
<div class="t " style="left:1854px;top:340px;font-size:9.5px;letter-spacing:-0.28px;color:#fff">4813.170</div>
<div class="t " style="left:1854px;top:372px;font-size:9.5px;letter-spacing:-0.28px;color:#fff">4808.970</div>
<div class="t " style="left:1854px;top:404px;font-size:9.5px;letter-spacing:-0.28px;color:#fff">4804.770</div>
<div class="t " style="left:1854px;top:436px;font-size:9.5px;letter-spacing:-0.28px;color:#fff">4800.570</div>
<div class="a" style="left:1851px;top:334px;width:44px;height:11px;background:#8898aa;"></div>
<div class="t " style="left:1854px;top:333px;font-size:9.5px;letter-spacing:-0.28px;color:#000">4814.125</div>
<div class="t " style="left:387px;top:477px;font-size:9.5px;letter-spacing:-0.25px;color:#fff">21 Jan 2026</div>
<div class="t " style="left:451px;top:477px;font-size:9.5px;letter-spacing:-0.25px;color:#fff">21 Jan 16:24</div>
<div class="t " style="left:515px;top:477px;font-size:9.5px;letter-spacing:-0.25px;color:#fff">21 Jan 16:28</div>
<div class="t " style="left:579px;top:477px;font-size:9.5px;letter-spacing:-0.25px;color:#fff">21 Jan 16:32</div>
<div class="t " style="left:643px;top:477px;font-size:9.5px;letter-spacing:-0.25px;color:#fff">21 Jan 16:36</div>
<div class="t " style="left:707px;top:477px;font-size:9.5px;letter-spacing:-0.25px;color:#fff">21 Jan 16:40</div>
<div class="t " style="left:771px;top:477px;font-size:9.5px;letter-spacing:-0.25px;color:#fff">21 Jan 16:44</div>
<div class="t " style="left:835px;top:477px;font-size:9.5px;letter-spacing:-0.25px;color:#fff">21 Jan 16:48</div>
<div class="t " style="left:899px;top:477px;font-size:9.5px;letter-spacing:-0.25px;color:#fff">21 Jan 16:52</div>
<div class="t " style="left:963px;top:477px;font-size:9.5px;letter-spacing:-0.25px;color:#fff">21 Jan 16:56</div>
<div class="t " style="left:1027px;top:477px;font-size:9.5px;letter-spacing:-0.25px;color:#fff">21 Jan 17:00</div>
<div class="t " style="left:1091px;top:477px;font-size:9.5px;letter-spacing:-0.25px;color:#fff">21 Jan 17:04</div>
<div class="t " style="left:1155px;top:477px;font-size:9.5px;letter-spacing:-0.25px;color:#fff">21 Jan 17:08</div>
<div class="t " style="left:1219px;top:477px;font-size:9.5px;letter-spacing:-0.25px;color:#fff">21 Jan 17:12</div>
<div class="t " style="left:1283px;top:477px;font-size:9.5px;letter-spacing:-0.25px;color:#fff">21 Jan 17:16</div>
<div class="t " style="left:1347px;top:477px;font-size:9.5px;letter-spacing:-0.25px;color:#fff">21 Jan 17:20</div>
<div class="t " style="left:1411px;top:477px;font-size:9.5px;letter-spacing:-0.25px;color:#fff">21 Jan 17:24</div>
<div class="t " style="left:1475px;top:477px;font-size:9.5px;letter-spacing:-0.25px;color:#fff">21 Jan 17:28</div>
<div class="t " style="left:1539px;top:477px;font-size:9.5px;letter-spacing:-0.25px;color:#fff">21 Jan 17:32</div>
<div class="t " style="left:1603px;top:477px;font-size:9.5px;letter-spacing:-0.25px;color:#fff">21 Jan 17:36</div>
<div class="t " style="left:1667px;top:477px;font-size:9.5px;letter-spacing:-0.25px;color:#fff">21 Jan 17:40</div>
<div class="t " style="left:1731px;top:477px;font-size:9.5px;letter-spacing:-0.25px;color:#fff">21 Jan 17:44</div>
<div class="t " style="left:1795px;top:477px;font-size:9.5px;letter-spacing:-0.25px;color:#fff">21 Jan 17:48</div>
<div class="a" style="left:2px;top:498px;width:1904px;height:1px;background:#3a3a3a;"></div>
<div class="a" style="left:2px;top:499px;width:1904px;height:1px;background:#c4c4c4;"></div>
<div class="a" style="left:2px;top:500px;width:16px;height:482px;background:#2f3342;"></div>
<div class="a" style="left:18px;top:500px;width:1871px;height:24px;background:#2b2b2b;"></div>
<svg width="10" height="10" style="left:5px;top:506px" viewBox="0 0 10 10"><path d="M1.500 1.500l7 7M8.500 1.500l-7 7" stroke="#f0f0f0" stroke-width="1.500" fill="none"/></svg>
<div class="t " style="left:26px;top:505px;font-size:12px;letter-spacing:-0.3px;color:#d0d0d0">Time</div>
<div class="t r " style="left:10px;width:300px;top:505px;font-size:12px;letter-spacing:-0.3px;color:#d0d0d0">Symbol</div>
<div class="t r " style="left:118px;width:300px;top:505px;font-size:12px;letter-spacing:-0.3px;color:#d0d0d0">Ticket</div>
<div class="t r " style="left:209px;width:300px;top:505px;font-size:12px;letter-spacing:-0.3px;color:#d0d0d0">Type</div>
<div class="t r " style="left:362px;width:300px;top:505px;font-size:12px;letter-spacing:-0.3px;color:#d0d0d0">Volume</div>
<div class="t r " style="left:515px;width:300px;top:505px;font-size:12px;letter-spacing:-0.3px;color:#d0d0d0">Price</div>
<div class="t r " style="left:668px;width:300px;top:505px;font-size:12px;letter-spacing:-0.3px;color:#d0d0d0">S / L</div>
<div class="t r " style="left:821px;width:300px;top:505px;font-size:12px;letter-spacing:-0.3px;color:#d0d0d0">T / P</div>
<div class="t r " style="left:939px;width:300px;top:505px;font-size:12px;letter-spacing:-0.3px;color:#d0d0d0">Time</div>
<div class="t r " style="left:1114px;width:300px;top:505px;font-size:12px;letter-spacing:-0.3px;color:#d0d0d0">Price</div>
<div class="t r " style="left:1483px;width:300px;top:505px;font-size:12px;letter-spacing:-0.3px;color:#d0d0d0">Profit</div>
<div class="t r " style="left:1583px;width:300px;top:505px;font-size:12px;letter-spacing:-0.3px;color:#d0d0d0">Change</div>
<svg width="8" height="5" style="left:1248px;top:509px" viewBox="0 0 8 5"><path d="M0 5h8l-4-4.500z" fill="#e0e0e0"/></svg>
<div class="a" style="left:20px;top:524px;width:1869px;height:19px;background:#2b2b2b;"></div>
<div class="a" style="left:20px;top:543px;width:1869px;height:1px;background:#474747;"></div>
<div class="a" style="left:821px;top:524px;width:152px;height:20px;background:#7f1c23;"></div>
<div class="a" style="left:821px;top:543px;width:152px;height:1px;background:#484848;"></div>
<svg width="12" height="17" style="left:23px;top:525px" viewBox="0 0 12 17"><rect x="1.600" y="1.600" width="9.800" height="13.800" rx="2" fill="none" stroke="#2f7fe6" stroke-width="1.300"/><path d="M5 5.500h3M5 8.500h3" stroke="#2f7fe6" stroke-width="1.200"/></svg>
<div class="t " style="left:41px;top:527px;font-size:12px;letter-spacing:-0.62px;color:#d8d8d8">2026.01.20 20:15:03</div>
<div class="t r " style="left:13px;width:300px;top:527px;font-size:12px;letter-spacing:-0.1px;color:#d8d8d8">xauusdm</div>
<div class="t r " style="left:120px;width:300px;top:527px;font-size:12px;letter-spacing:-0.62px;color:#d8d8d8">753497522</div>
<div class="t r " style="left:211px;width:300px;top:527px;font-size:12px;letter-spacing:-0.1px;color:#d8d8d8">buy</div>
<div class="t r " style="left:364px;width:300px;top:527px;font-size:12px;letter-spacing:-0.62px;color:#d8d8d8">0.04</div>
<div class="t r " style="left:517px;width:300px;top:527px;font-size:12px;letter-spacing:-0.62px;color:#d8d8d8">4760.655</div>
<div class="t r " style="left:670px;width:300px;top:527px;font-size:12px;letter-spacing:-0.62px;color:#d8d8d8">4761.155</div>
<div class="t r " style="left:823px;width:300px;top:527px;font-size:12px;letter-spacing:-0.62px;color:#d8d8d8">4796.266</div>
<div class="t r " style="left:963px;width:300px;top:527px;font-size:12px;letter-spacing:-0.62px;color:#d8d8d8">2026.01.20 23:00:47</div>
<div class="t r " style="left:1116px;width:300px;top:527px;font-size:12px;letter-spacing:-0.62px;color:#d8d8d8">4761.155</div>
<div class="t r " style="left:1485px;width:300px;top:527px;font-size:12px;letter-spacing:-0.62px;color:#2f8ff0">2.00</div>
<div class="t r " style="left:1585px;width:300px;top:527px;font-size:12px;letter-spacing:-0.5px;color:#2f8ff0">0.01 %</div>
<div class="a" style="left:20px;top:544px;width:1869px;height:19px;background:#343434;"></div>
<div class="a" style="left:20px;top:563px;width:1869px;height:1px;background:#474747;"></div>
<div class="a" style="left:821px;top:544px;width:152px;height:20px;background:#7f1c23;"></div>
<div class="a" style="left:821px;top:563px;width:152px;height:1px;background:#484848;"></div>
<svg width="12" height="17" style="left:23px;top:545px" viewBox="0 0 12 17"><rect x="1.600" y="1.600" width="9.800" height="13.800" rx="2" fill="none" stroke="#2f7fe6" stroke-width="1.300"/><path d="M5 5.500h3M5 8.500h3" stroke="#2f7fe6" stroke-width="1.200"/></svg>
<div class="t " style="left:41px;top:547px;font-size:12px;letter-spacing:-0.62px;color:#d8d8d8">2026.01.20 21:20:00</div>
<div class="t r " style="left:13px;width:300px;top:547px;font-size:12px;letter-spacing:-0.1px;color:#d8d8d8">xauusdm</div>
<div class="t r " style="left:120px;width:300px;top:547px;font-size:12px;letter-spacing:-0.62px;color:#d8d8d8">753852600</div>
<div class="t r " style="left:211px;width:300px;top:547px;font-size:12px;letter-spacing:-0.1px;color:#d8d8d8">buy</div>
<div class="t r " style="left:364px;width:300px;top:547px;font-size:12px;letter-spacing:-0.62px;color:#d8d8d8">0.04</div>
<div class="t r " style="left:517px;width:300px;top:547px;font-size:12px;letter-spacing:-0.62px;color:#d8d8d8">4760.622</div>
<div class="t r " style="left:670px;width:300px;top:547px;font-size:12px;letter-spacing:-0.62px;color:#d8d8d8">4761.122</div>
<div class="t r " style="left:823px;width:300px;top:547px;font-size:12px;letter-spacing:-0.62px;color:#d8d8d8">4804.963</div>
<div class="t r " style="left:963px;width:300px;top:547px;font-size:12px;letter-spacing:-0.62px;color:#d8d8d8">2026.01.20 23:00:47</div>
<div class="t r " style="left:1116px;width:300px;top:547px;font-size:12px;letter-spacing:-0.62px;color:#d8d8d8">4761.122</div>
<div class="t r " style="left:1485px;width:300px;top:547px;font-size:12px;letter-spacing:-0.62px;color:#2f8ff0">2.00</div>
<div class="t r " style="left:1585px;width:300px;top:547px;font-size:12px;letter-spacing:-0.5px;color:#2f8ff0">0.01 %</div>
<div class="a" style="left:20px;top:564px;width:1869px;height:19px;background:#2b2b2b;"></div>
<div class="a" style="left:20px;top:583px;width:1869px;height:1px;background:#474747;"></div>
<div class="a" style="left:821px;top:564px;width:152px;height:20px;background:#7f1c23;"></div>
<div class="a" style="left:821px;top:583px;width:152px;height:1px;background:#484848;"></div>
<svg width="12" height="17" style="left:23px;top:565px" viewBox="0 0 12 17"><rect x="1.600" y="1.600" width="9.800" height="13.800" rx="2" fill="none" stroke="#2f7fe6" stroke-width="1.300"/><path d="M5 5.500h3M5 8.500h3" stroke="#2f7fe6" stroke-width="1.200"/></svg>
<div class="t " style="left:41px;top:567px;font-size:12px;letter-spacing:-0.62px;color:#d8d8d8">2026.01.20 21:30:00</div>
<div class="t r " style="left:13px;width:300px;top:567px;font-size:12px;letter-spacing:-0.1px;color:#d8d8d8">xauusdm</div>
<div class="t r " style="left:120px;width:300px;top:567px;font-size:12px;letter-spacing:-0.62px;color:#d8d8d8">753879635</div>
<div class="t r " style="left:211px;width:300px;top:567px;font-size:12px;letter-spacing:-0.1px;color:#d8d8d8">buy</div>
<div class="t r " style="left:364px;width:300px;top:567px;font-size:12px;letter-spacing:-0.62px;color:#d8d8d8">0.04</div>
<div class="t r " style="left:517px;width:300px;top:567px;font-size:12px;letter-spacing:-0.62px;color:#d8d8d8">4759.730</div>
<div class="t r " style="left:670px;width:300px;top:567px;font-size:12px;letter-spacing:-0.62px;color:#d8d8d8">4760.230</div>
<div class="t r " style="left:823px;width:300px;top:567px;font-size:12px;letter-spacing:-0.62px;color:#d8d8d8">4796.922</div>
<div class="t r " style="left:963px;width:300px;top:567px;font-size:12px;letter-spacing:-0.62px;color:#d8d8d8">2026.01.20 23:01:17</div>
<div class="t r " style="left:1116px;width:300px;top:567px;font-size:12px;letter-spacing:-0.62px;color:#d8d8d8">4760.230</div>
<div class="t r " style="left:1485px;width:300px;top:567px;font-size:12px;letter-spacing:-0.62px;color:#2f8ff0">2.00</div>
<div class="t r " style="left:1585px;width:300px;top:567px;font-size:12px;letter-spacing:-0.5px;color:#2f8ff0">0.01 %</div>
<div class="a" style="left:20px;top:584px;width:1869px;height:19px;background:#343434;"></div>
<div class="a" style="left:20px;top:603px;width:1869px;height:1px;background:#474747;"></div>
<div class="a" style="left:821px;top:584px;width:152px;height:20px;background:#7f1c23;"></div>
<div class="a" style="left:821px;top:603px;width:152px;height:1px;background:#484848;"></div>
<svg width="12" height="17" style="left:23px;top:585px" viewBox="0 0 12 17"><rect x="1.600" y="1.600" width="9.800" height="13.800" rx="2" fill="none" stroke="#2f7fe6" stroke-width="1.300"/><path d="M5 5.500h3M5 8.500h3" stroke="#2f7fe6" stroke-width="1.200"/></svg>
<div class="t " style="left:41px;top:587px;font-size:12px;letter-spacing:-0.62px;color:#d8d8d8">2026.01.20 21:45:01</div>
<div class="t r " style="left:13px;width:300px;top:587px;font-size:12px;letter-spacing:-0.1px;color:#d8d8d8">xauusdm</div>
<div class="t r " style="left:120px;width:300px;top:587px;font-size:12px;letter-spacing:-0.62px;color:#d8d8d8">753925102</div>
<div class="t r " style="left:211px;width:300px;top:587px;font-size:12px;letter-spacing:-0.1px;color:#d8d8d8">buy</div>
<div class="t r " style="left:364px;width:300px;top:587px;font-size:12px;letter-spacing:-0.62px;color:#d8d8d8">0.06</div>
<div class="t r " style="left:517px;width:300px;top:587px;font-size:12px;letter-spacing:-0.62px;color:#d8d8d8">4759.565</div>
<div class="t r " style="left:670px;width:300px;top:587px;font-size:12px;letter-spacing:-0.62px;color:#d8d8d8">4760.065</div>
<div class="t r " style="left:823px;width:300px;top:587px;font-size:12px;letter-spacing:-0.62px;color:#d8d8d8">4786.021</div>
<div class="t r " style="left:963px;width:300px;top:587px;font-size:12px;letter-spacing:-0.62px;color:#d8d8d8">2026.01.20 23:01:17</div>
<div class="t r " style="left:1116px;width:300px;top:587px;font-size:12px;letter-spacing:-0.62px;color:#d8d8d8">4760.065</div>
<div class="t r " style="left:1485px;width:300px;top:587px;font-size:12px;letter-spacing:-0.62px;color:#2f8ff0">3.00</div>
<div class="t r " style="left:1585px;width:300px;top:587px;font-size:12px;letter-spacing:-0.5px;color:#2f8ff0">0.01 %</div>
<div class="a" style="left:20px;top:604px;width:1869px;height:19px;background:#2b2b2b;"></div>
<div class="a" style="left:20px;top:623px;width:1869px;height:1px;background:#474747;"></div>
<div class="a" style="left:974px;top:604px;width:152px;height:19px;background:#0a5a1e;"></div>
<svg width="12" height="17" style="left:23px;top:605px" viewBox="0 0 12 17"><rect x="1.600" y="1.600" width="9.800" height="13.800" rx="2" fill="none" stroke="#2f7fe6" stroke-width="1.300"/><path d="M5 5.500h3M5 8.500h3" stroke="#2f7fe6" stroke-width="1.200"/></svg>
<div class="t " style="left:41px;top:607px;font-size:12px;letter-spacing:-0.62px;color:#d8d8d8">2026.01.20 21:55:00</div>
<div class="t r " style="left:13px;width:300px;top:607px;font-size:12px;letter-spacing:-0.1px;color:#d8d8d8">xauusdm</div>
<div class="t r " style="left:120px;width:300px;top:607px;font-size:12px;letter-spacing:-0.62px;color:#d8d8d8">753958499</div>
<div class="t r " style="left:211px;width:300px;top:607px;font-size:12px;letter-spacing:-0.1px;color:#d8d8d8">buy</div>
<div class="t r " style="left:364px;width:300px;top:607px;font-size:12px;letter-spacing:-0.62px;color:#d8d8d8">0.07</div>
<div class="t r " style="left:517px;width:300px;top:607px;font-size:12px;letter-spacing:-0.62px;color:#d8d8d8">4762.784</div>
<div class="t r " style="left:823px;width:300px;top:607px;font-size:12px;letter-spacing:-0.62px;color:#d8d8d8">4788.002</div>
<div class="t r " style="left:963px;width:300px;top:607px;font-size:12px;letter-spacing:-0.62px;color:#d8d8d8">2026.01.21 01:01:10</div>
<div class="t r " style="left:1116px;width:300px;top:607px;font-size:12px;letter-spacing:-0.62px;color:#d8d8d8">4788.002</div>
<div class="t r " style="left:1485px;width:300px;top:607px;font-size:12px;letter-spacing:-0.62px;color:#2f8ff0">176.52</div>
<div class="t r " style="left:1585px;width:300px;top:607px;font-size:12px;letter-spacing:-0.5px;color:#2f8ff0">0.53 %</div>
<div class="a" style="left:20px;top:624px;width:1869px;height:19px;background:#343434;"></div>
<div class="a" style="left:20px;top:643px;width:1869px;height:1px;background:#474747;"></div>
<div class="a" style="left:821px;top:624px;width:152px;height:20px;background:#7f1c23;"></div>
<div class="a" style="left:821px;top:643px;width:152px;height:1px;background:#484848;"></div>
<svg width="12" height="17" style="left:23px;top:625px" viewBox="0 0 12 17"><rect x="1.600" y="1.600" width="9.800" height="13.800" rx="2" fill="none" stroke="#2f7fe6" stroke-width="1.300"/><path d="M5 5.500h3M5 8.500h3" stroke="#2f7fe6" stroke-width="1.200"/></svg>
<div class="t " style="left:41px;top:627px;font-size:12px;letter-spacing:-0.62px;color:#d8d8d8">2026.01.21 16:33:04</div>
<div class="t r " style="left:13px;width:300px;top:627px;font-size:12px;letter-spacing:-0.1px;color:#d8d8d8">xauusdm</div>
<div class="t r " style="left:120px;width:300px;top:627px;font-size:12px;letter-spacing:-0.62px;color:#d8d8d8">763004227</div>
<div class="t r " style="left:211px;width:300px;top:627px;font-size:12px;letter-spacing:-0.1px;color:#d8d8d8">buy</div>
<div class="t r " style="left:364px;width:300px;top:627px;font-size:12px;letter-spacing:-0.62px;color:#d8d8d8">0.04</div>
<div class="t r " style="left:517px;width:300px;top:627px;font-size:12px;letter-spacing:-0.62px;color:#d8d8d8">4843.210</div>
<div class="t r " style="left:670px;width:300px;top:627px;font-size:12px;letter-spacing:-0.62px;color:#d8d8d8">4843.710</div>
<div class="t r " style="left:823px;width:300px;top:627px;font-size:12px;letter-spacing:-0.62px;color:#d8d8d8">4887.110</div>
<div class="t r " style="left:963px;width:300px;top:627px;font-size:12px;letter-spacing:-0.62px;color:#d8d8d8">2026.01.21 16:33:29</div>
<div class="t r " style="left:1116px;width:300px;top:627px;font-size:12px;letter-spacing:-0.62px;color:#d8d8d8">4843.710</div>
<div class="t r " style="left:1485px;width:300px;top:627px;font-size:12px;letter-spacing:-0.62px;color:#2f8ff0">2.00</div>
<div class="t r " style="left:1585px;width:300px;top:627px;font-size:12px;letter-spacing:-0.5px;color:#2f8ff0">0.01 %</div>
<div class="a" style="left:20px;top:644px;width:1869px;height:19px;background:#2b2b2b;"></div>
<div class="a" style="left:20px;top:663px;width:1869px;height:1px;background:#474747;"></div>
<div class="a" style="left:821px;top:644px;width:152px;height:20px;background:#7f1c23;"></div>
<div class="a" style="left:821px;top:663px;width:152px;height:1px;background:#484848;"></div>
<svg width="12" height="17" style="left:23px;top:645px" viewBox="0 0 12 17"><rect x="1.600" y="1.600" width="9.800" height="13.800" rx="2" fill="none" stroke="#2f7fe6" stroke-width="1.300"/><path d="M5 5.500h3M5 8.500h3" stroke="#2f7fe6" stroke-width="1.200"/></svg>
<div class="t " style="left:41px;top:647px;font-size:12px;letter-spacing:-0.62px;color:#d8d8d8">2026.01.21 16:39:09</div>
<div class="t r " style="left:13px;width:300px;top:647px;font-size:12px;letter-spacing:-0.1px;color:#d8d8d8">xauusdm</div>
<div class="t r " style="left:120px;width:300px;top:647px;font-size:12px;letter-spacing:-0.62px;color:#d8d8d8">763072697</div>
<div class="t r " style="left:211px;width:300px;top:647px;font-size:12px;letter-spacing:-0.1px;color:#d8d8d8">buy</div>
<div class="t r " style="left:364px;width:300px;top:647px;font-size:12px;letter-spacing:-0.62px;color:#d8d8d8">0.05</div>
<div class="t r " style="left:517px;width:300px;top:647px;font-size:12px;letter-spacing:-0.62px;color:#d8d8d8">4846.542</div>
<div class="t r " style="left:670px;width:300px;top:647px;font-size:12px;letter-spacing:-0.62px;color:#d8d8d8">4847.042</div>
<div class="t r " style="left:823px;width:300px;top:647px;font-size:12px;letter-spacing:-0.62px;color:#d8d8d8">4885.031</div>
<div class="t r " style="left:963px;width:300px;top:647px;font-size:12px;letter-spacing:-0.62px;color:#d8d8d8">2026.01.21 16:40:31</div>
<div class="t r " style="left:1116px;width:300px;top:647px;font-size:12px;letter-spacing:-0.62px;color:#d8d8d8">4846.537</div>
<div class="t r " style="left:1485px;width:300px;top:647px;font-size:12px;letter-spacing:-0.62px;color:#f0605c">-0.02</div>
<div class="t r " style="left:1585px;width:300px;top:647px;font-size:12px;letter-spacing:-0.5px;color:#f0605c">-0.00 %</div>
<div class="a" style="left:20px;top:664px;width:1869px;height:19px;background:#343434;"></div>
<div class="a" style="left:20px;top:683px;width:1869px;height:1px;background:#474747;"></div>
<div class="a" style="left:821px;top:664px;width:152px;height:20px;background:#7f1c23;"></div>
<div class="a" style="left:821px;top:683px;width:152px;height:1px;background:#484848;"></div>
<svg width="12" height="17" style="left:23px;top:665px" viewBox="0 0 12 17"><rect x="1.600" y="1.600" width="9.800" height="13.800" rx="2" fill="none" stroke="#f0504c" stroke-width="1.300"/><path d="M5 5.500h3M5 8.500h3" stroke="#f0504c" stroke-width="1.200"/></svg>
<div class="t " style="left:41px;top:667px;font-size:12px;letter-spacing:-0.62px;color:#d8d8d8">2026.01.21 16:45:03</div>
<div class="t r " style="left:13px;width:300px;top:667px;font-size:12px;letter-spacing:-0.1px;color:#d8d8d8">xauusdm</div>
<div class="t r " style="left:120px;width:300px;top:667px;font-size:12px;letter-spacing:-0.62px;color:#d8d8d8">763148680</div>
<div class="t r " style="left:211px;width:300px;top:667px;font-size:12px;letter-spacing:-0.1px;color:#d8d8d8">sell</div>
<div class="t r " style="left:364px;width:300px;top:667px;font-size:12px;letter-spacing:-0.62px;color:#d8d8d8">0.05</div>
<div class="t r " style="left:517px;width:300px;top:667px;font-size:12px;letter-spacing:-0.62px;color:#d8d8d8">4833.974</div>
<div class="t r " style="left:670px;width:300px;top:667px;font-size:12px;letter-spacing:-0.62px;color:#d8d8d8">4833.474</div>
<div class="t r " style="left:823px;width:300px;top:667px;font-size:12px;letter-spacing:-0.62px;color:#d8d8d8">4791.196</div>
<div class="t r " style="left:963px;width:300px;top:667px;font-size:12px;letter-spacing:-0.62px;color:#d8d8d8">2026.01.21 16:45:15</div>
<div class="t r " style="left:1116px;width:300px;top:667px;font-size:12px;letter-spacing:-0.62px;color:#d8d8d8">4833.474</div>
<div class="t r " style="left:1485px;width:300px;top:667px;font-size:12px;letter-spacing:-0.62px;color:#2f8ff0">2.50</div>
<div class="t r " style="left:1585px;width:300px;top:667px;font-size:12px;letter-spacing:-0.5px;color:#2f8ff0">0.01 %</div>
<div class="a" style="left:20px;top:684px;width:1869px;height:19px;background:#2b2b2b;"></div>
<div class="a" style="left:20px;top:703px;width:1869px;height:1px;background:#474747;"></div>
<div class="a" style="left:821px;top:684px;width:152px;height:20px;background:#7f1c23;"></div>
<div class="a" style="left:821px;top:703px;width:152px;height:1px;background:#484848;"></div>
<svg width="12" height="17" style="left:23px;top:685px" viewBox="0 0 12 17"><rect x="1.600" y="1.600" width="9.800" height="13.800" rx="2" fill="none" stroke="#f0504c" stroke-width="1.300"/><path d="M5 5.500h3M5 8.500h3" stroke="#f0504c" stroke-width="1.200"/></svg>
<div class="t " style="left:41px;top:687px;font-size:12px;letter-spacing:-0.62px;color:#d8d8d8">2026.01.21 16:45:02</div>
<div class="t r " style="left:13px;width:300px;top:687px;font-size:12px;letter-spacing:-0.1px;color:#d8d8d8">xauusdm</div>
<div class="t r " style="left:120px;width:300px;top:687px;font-size:12px;letter-spacing:-0.62px;color:#d8d8d8">763148231</div>
<div class="t r " style="left:211px;width:300px;top:687px;font-size:12px;letter-spacing:-0.1px;color:#d8d8d8">sell</div>
<div class="t r " style="left:364px;width:300px;top:687px;font-size:12px;letter-spacing:-0.62px;color:#d8d8d8">0.05</div>
<div class="t r " style="left:517px;width:300px;top:687px;font-size:12px;letter-spacing:-0.62px;color:#d8d8d8">4833.948</div>
<div class="t r " style="left:670px;width:300px;top:687px;font-size:12px;letter-spacing:-0.62px;color:#d8d8d8">4833.448</div>
<div class="t r " style="left:823px;width:300px;top:687px;font-size:12px;letter-spacing:-0.62px;color:#d8d8d8">4791.810</div>
<div class="t r " style="left:963px;width:300px;top:687px;font-size:12px;letter-spacing:-0.62px;color:#d8d8d8">2026.01.21 16:45:15</div>
<div class="t r " style="left:1116px;width:300px;top:687px;font-size:12px;letter-spacing:-0.62px;color:#d8d8d8">4833.448</div>
<div class="t r " style="left:1485px;width:300px;top:687px;font-size:12px;letter-spacing:-0.62px;color:#2f8ff0">2.50</div>
<div class="t r " style="left:1585px;width:300px;top:687px;font-size:12px;letter-spacing:-0.5px;color:#2f8ff0">0.01 %</div>
<div class="a" style="left:20px;top:704px;width:1869px;height:19px;background:#343434;"></div>
<div class="a" style="left:20px;top:723px;width:1869px;height:1px;background:#474747;"></div>
<div class="a" style="left:821px;top:704px;width:152px;height:20px;background:#7f1c23;"></div>
<div class="a" style="left:821px;top:723px;width:152px;height:1px;background:#484848;"></div>
<svg width="12" height="17" style="left:23px;top:705px" viewBox="0 0 12 17"><rect x="1.600" y="1.600" width="9.800" height="13.800" rx="2" fill="none" stroke="#f0504c" stroke-width="1.300"/><path d="M5 5.500h3M5 8.500h3" stroke="#f0504c" stroke-width="1.200"/></svg>
<div class="t " style="left:41px;top:707px;font-size:12px;letter-spacing:-0.62px;color:#d8d8d8">2026.01.21 16:51:01</div>
<div class="t r " style="left:13px;width:300px;top:707px;font-size:12px;letter-spacing:-0.1px;color:#d8d8d8">xauusdm</div>
<div class="t r " style="left:120px;width:300px;top:707px;font-size:12px;letter-spacing:-0.62px;color:#d8d8d8">763217494</div>
<div class="t r " style="left:211px;width:300px;top:707px;font-size:12px;letter-spacing:-0.1px;color:#d8d8d8">sell</div>
<div class="t r " style="left:364px;width:300px;top:707px;font-size:12px;letter-spacing:-0.62px;color:#d8d8d8">0.05</div>
<div class="t r " style="left:517px;width:300px;top:707px;font-size:12px;letter-spacing:-0.62px;color:#d8d8d8">4830.368</div>
<div class="t r " style="left:670px;width:300px;top:707px;font-size:12px;letter-spacing:-0.62px;color:#d8d8d8">4821.318</div>
<div class="t r " style="left:823px;width:300px;top:707px;font-size:12px;letter-spacing:-0.62px;color:#d8d8d8">4787.554</div>
<div class="t r " style="left:963px;width:300px;top:707px;font-size:12px;letter-spacing:-0.62px;color:#d8d8d8">2026.01.21 16:52:12</div>
<div class="t r " style="left:1116px;width:300px;top:707px;font-size:12px;letter-spacing:-0.62px;color:#d8d8d8">4821.318</div>
<div class="t r " style="left:1485px;width:300px;top:707px;font-size:12px;letter-spacing:-0.62px;color:#2f8ff0">45.25</div>
<div class="t r " style="left:1585px;width:300px;top:707px;font-size:12px;letter-spacing:-0.5px;color:#2f8ff0">0.19 %</div>
<div class="a" style="left:20px;top:724px;width:1869px;height:19px;background:#2b2b2b;"></div>
<div class="a" style="left:20px;top:743px;width:1869px;height:1px;background:#474747;"></div>
<div class="a" style="left:821px;top:724px;width:152px;height:20px;background:#7f1c23;"></div>
<div class="a" style="left:821px;top:743px;width:152px;height:1px;background:#484848;"></div>
<svg width="12" height="17" style="left:23px;top:725px" viewBox="0 0 12 17"><rect x="1.600" y="1.600" width="9.800" height="13.800" rx="2" fill="none" stroke="#f0504c" stroke-width="1.300"/><path d="M5 5.500h3M5 8.500h3" stroke="#f0504c" stroke-width="1.200"/></svg>
<div class="t " style="left:41px;top:727px;font-size:12px;letter-spacing:-0.62px;color:#d8d8d8">2026.01.21 16:51:01</div>
<div class="t r " style="left:13px;width:300px;top:727px;font-size:12px;letter-spacing:-0.1px;color:#d8d8d8">xauusdm</div>
<div class="t r " style="left:120px;width:300px;top:727px;font-size:12px;letter-spacing:-0.62px;color:#d8d8d8">763217336</div>
<div class="t r " style="left:211px;width:300px;top:727px;font-size:12px;letter-spacing:-0.1px;color:#d8d8d8">sell</div>
<div class="t r " style="left:364px;width:300px;top:727px;font-size:12px;letter-spacing:-0.62px;color:#d8d8d8">0.05</div>
<div class="t r " style="left:517px;width:300px;top:727px;font-size:12px;letter-spacing:-0.62px;color:#d8d8d8">4830.360</div>
<div class="t r " style="left:670px;width:300px;top:727px;font-size:12px;letter-spacing:-0.62px;color:#d8d8d8">4821.371</div>
<div class="t r " style="left:823px;width:300px;top:727px;font-size:12px;letter-spacing:-0.62px;color:#d8d8d8">4787.546</div>
<div class="t r " style="left:963px;width:300px;top:727px;font-size:12px;letter-spacing:-0.62px;color:#d8d8d8">2026.01.21 16:52:12</div>
<div class="t r " style="left:1116px;width:300px;top:727px;font-size:12px;letter-spacing:-0.62px;color:#d8d8d8">4821.371</div>
<div class="t r " style="left:1485px;width:300px;top:727px;font-size:12px;letter-spacing:-0.62px;color:#2f8ff0">44.94</div>
<div class="t r " style="left:1585px;width:300px;top:727px;font-size:12px;letter-spacing:-0.5px;color:#2f8ff0">0.19 %</div>
<div class="a" style="left:20px;top:744px;width:1869px;height:19px;background:#343434;"></div>
<div class="a" style="left:20px;top:763px;width:1869px;height:1px;background:#474747;"></div>
<div class="a" style="left:821px;top:744px;width:152px;height:20px;background:#7f1c23;"></div>
<div class="a" style="left:821px;top:763px;width:152px;height:1px;background:#484848;"></div>
<svg width="12" height="17" style="left:23px;top:745px" viewBox="0 0 12 17"><rect x="1.600" y="1.600" width="9.800" height="13.800" rx="2" fill="none" stroke="#f0504c" stroke-width="1.300"/><path d="M5 5.500h3M5 8.500h3" stroke="#f0504c" stroke-width="1.200"/></svg>
<div class="t " style="left:41px;top:747px;font-size:12px;letter-spacing:-0.62px;color:#d8d8d8">2026.01.21 17:01:00</div>
<div class="t r " style="left:13px;width:300px;top:747px;font-size:12px;letter-spacing:-0.1px;color:#d8d8d8">xauusdm</div>
<div class="t r " style="left:120px;width:300px;top:747px;font-size:12px;letter-spacing:-0.62px;color:#d8d8d8">763348749</div>
<div class="t r " style="left:211px;width:300px;top:747px;font-size:12px;letter-spacing:-0.1px;color:#d8d8d8">sell</div>
<div class="t r " style="left:364px;width:300px;top:747px;font-size:12px;letter-spacing:-0.62px;color:#d8d8d8">0.04</div>
<div class="t r " style="left:517px;width:300px;top:747px;font-size:12px;letter-spacing:-0.62px;color:#d8d8d8">4830.199</div>
<div class="t r " style="left:670px;width:300px;top:747px;font-size:12px;letter-spacing:-0.62px;color:#d8d8d8">4822.764</div>
<div class="t r " style="left:823px;width:300px;top:747px;font-size:12px;letter-spacing:-0.62px;color:#d8d8d8">4782.327</div>
<div class="t r " style="left:963px;width:300px;top:747px;font-size:12px;letter-spacing:-0.62px;color:#d8d8d8">2026.01.21 17:03:23</div>
<div class="t r " style="left:1116px;width:300px;top:747px;font-size:12px;letter-spacing:-0.62px;color:#d8d8d8">4822.765</div>
<div class="t r " style="left:1485px;width:300px;top:747px;font-size:12px;letter-spacing:-0.62px;color:#2f8ff0">29.74</div>
<div class="t r " style="left:1585px;width:300px;top:747px;font-size:12px;letter-spacing:-0.5px;color:#2f8ff0">0.15 %</div>
<div class="a" style="left:20px;top:764px;width:1869px;height:19px;background:#2b2b2b;"></div>
<div class="a" style="left:20px;top:783px;width:1869px;height:1px;background:#474747;"></div>
<div class="a" style="left:821px;top:764px;width:152px;height:20px;background:#7f1c23;"></div>
<div class="a" style="left:821px;top:783px;width:152px;height:1px;background:#484848;"></div>
<svg width="12" height="17" style="left:23px;top:765px" viewBox="0 0 12 17"><rect x="1.600" y="1.600" width="9.800" height="13.800" rx="2" fill="none" stroke="#f0504c" stroke-width="1.300"/><path d="M5 5.500h3M5 8.500h3" stroke="#f0504c" stroke-width="1.200"/></svg>
<div class="t " style="left:41px;top:767px;font-size:12px;letter-spacing:-0.62px;color:#d8d8d8">2026.01.21 17:06:01</div>
<div class="t r " style="left:13px;width:300px;top:767px;font-size:12px;letter-spacing:-0.1px;color:#d8d8d8">xauusdm</div>
<div class="t r " style="left:120px;width:300px;top:767px;font-size:12px;letter-spacing:-0.62px;color:#d8d8d8">763418857</div>
<div class="t r " style="left:211px;width:300px;top:767px;font-size:12px;letter-spacing:-0.1px;color:#d8d8d8">sell</div>
<div class="t r " style="left:364px;width:300px;top:767px;font-size:12px;letter-spacing:-0.62px;color:#d8d8d8">0.04</div>
<div class="t r " style="left:517px;width:300px;top:767px;font-size:12px;letter-spacing:-0.62px;color:#d8d8d8">4825.077</div>
<div class="t r " style="left:670px;width:300px;top:767px;font-size:12px;letter-spacing:-0.62px;color:#d8d8d8">4819.934</div>
<div class="t r " style="left:823px;width:300px;top:767px;font-size:12px;letter-spacing:-0.62px;color:#d8d8d8">4773.459</div>
<div class="t r " style="left:963px;width:300px;top:767px;font-size:12px;letter-spacing:-0.62px;color:#d8d8d8">2026.01.21 17:12:32</div>
<div class="t r " style="left:1116px;width:300px;top:767px;font-size:12px;letter-spacing:-0.62px;color:#d8d8d8">4819.934</div>
<div class="t r " style="left:1485px;width:300px;top:767px;font-size:12px;letter-spacing:-0.62px;color:#2f8ff0">20.57</div>
<div class="t r " style="left:1585px;width:300px;top:767px;font-size:12px;letter-spacing:-0.5px;color:#2f8ff0">0.11 %</div>
<div class="a" style="left:20px;top:784px;width:1869px;height:19px;background:#343434;"></div>
<div class="a" style="left:20px;top:803px;width:1869px;height:1px;background:#474747;"></div>
<div class="a" style="left:821px;top:784px;width:152px;height:20px;background:#7f1c23;"></div>
<div class="a" style="left:821px;top:803px;width:152px;height:1px;background:#484848;"></div>
<svg width="12" height="17" style="left:23px;top:785px" viewBox="0 0 12 17"><rect x="1.600" y="1.600" width="9.800" height="13.800" rx="2" fill="none" stroke="#f0504c" stroke-width="1.300"/><path d="M5 5.500h3M5 8.500h3" stroke="#f0504c" stroke-width="1.200"/></svg>
<div class="t " style="left:41px;top:787px;font-size:12px;letter-spacing:-0.62px;color:#d8d8d8">2026.01.21 17:12:00</div>
<div class="t r " style="left:13px;width:300px;top:787px;font-size:12px;letter-spacing:-0.1px;color:#d8d8d8">xauusdm</div>
<div class="t r " style="left:120px;width:300px;top:787px;font-size:12px;letter-spacing:-0.62px;color:#d8d8d8">763488057</div>
<div class="t r " style="left:211px;width:300px;top:787px;font-size:12px;letter-spacing:-0.1px;color:#d8d8d8">sell</div>
<div class="t r " style="left:364px;width:300px;top:787px;font-size:12px;letter-spacing:-0.62px;color:#d8d8d8">0.05</div>
<div class="t r " style="left:517px;width:300px;top:787px;font-size:12px;letter-spacing:-0.62px;color:#d8d8d8">4825.618</div>
<div class="t r " style="left:670px;width:300px;top:787px;font-size:12px;letter-spacing:-0.62px;color:#d8d8d8">4820.008</div>
<div class="t r " style="left:823px;width:300px;top:787px;font-size:12px;letter-spacing:-0.62px;color:#d8d8d8">4784.562</div>
<div class="t r " style="left:963px;width:300px;top:787px;font-size:12px;letter-spacing:-0.62px;color:#d8d8d8">2026.01.21 17:12:32</div>
<div class="t r " style="left:1116px;width:300px;top:787px;font-size:12px;letter-spacing:-0.62px;color:#d8d8d8">4820.008</div>
<div class="t r " style="left:1485px;width:300px;top:787px;font-size:12px;letter-spacing:-0.62px;color:#2f8ff0">28.05</div>
<div class="t r " style="left:1585px;width:300px;top:787px;font-size:12px;letter-spacing:-0.5px;color:#2f8ff0">0.12 %</div>
<div class="a" style="left:20px;top:804px;width:1869px;height:19px;background:#2b2b2b;"></div>
<div class="a" style="left:20px;top:823px;width:1869px;height:1px;background:#474747;"></div>
<div class="a" style="left:821px;top:804px;width:152px;height:20px;background:#7f1c23;"></div>
<div class="a" style="left:821px;top:823px;width:152px;height:1px;background:#484848;"></div>
<svg width="12" height="17" style="left:23px;top:805px" viewBox="0 0 12 17"><rect x="1.600" y="1.600" width="9.800" height="13.800" rx="2" fill="none" stroke="#f0504c" stroke-width="1.300"/><path d="M5 5.500h3M5 8.500h3" stroke="#f0504c" stroke-width="1.200"/></svg>
<div class="t " style="left:41px;top:807px;font-size:12px;letter-spacing:-0.62px;color:#d8d8d8">2026.01.21 17:18:00</div>
<div class="t r " style="left:13px;width:300px;top:807px;font-size:12px;letter-spacing:-0.1px;color:#d8d8d8">xauusdm</div>
<div class="t r " style="left:120px;width:300px;top:807px;font-size:12px;letter-spacing:-0.62px;color:#d8d8d8">763583254</div>
<div class="t r " style="left:211px;width:300px;top:807px;font-size:12px;letter-spacing:-0.1px;color:#d8d8d8">sell</div>
<div class="t r " style="left:364px;width:300px;top:807px;font-size:12px;letter-spacing:-0.62px;color:#d8d8d8">0.05</div>
<div class="t r " style="left:517px;width:300px;top:807px;font-size:12px;letter-spacing:-0.62px;color:#d8d8d8">4820.472</div>
<div class="t r " style="left:670px;width:300px;top:807px;font-size:12px;letter-spacing:-0.62px;color:#d8d8d8">4819.972</div>
<div class="t r " style="left:823px;width:300px;top:807px;font-size:12px;letter-spacing:-0.62px;color:#d8d8d8">4778.668</div>
<div class="t r " style="left:963px;width:300px;top:807px;font-size:12px;letter-spacing:-0.62px;color:#d8d8d8">2026.01.21 17:19:07</div>
<div class="t r " style="left:1116px;width:300px;top:807px;font-size:12px;letter-spacing:-0.62px;color:#d8d8d8">4819.972</div>
<div class="t r " style="left:1485px;width:300px;top:807px;font-size:12px;letter-spacing:-0.62px;color:#2f8ff0">2.50</div>
<div class="t r " style="left:1585px;width:300px;top:807px;font-size:12px;letter-spacing:-0.5px;color:#2f8ff0">0.01 %</div>
<div class="a" style="left:20px;top:824px;width:1869px;height:19px;background:#343434;"></div>
<div class="a" style="left:20px;top:843px;width:1869px;height:1px;background:#474747;"></div>
<div class="a" style="left:821px;top:824px;width:152px;height:20px;background:#7f1c23;"></div>
<div class="a" style="left:821px;top:843px;width:152px;height:1px;background:#484848;"></div>
<svg width="12" height="17" style="left:23px;top:825px" viewBox="0 0 12 17"><rect x="1.600" y="1.600" width="9.800" height="13.800" rx="2" fill="none" stroke="#f0504c" stroke-width="1.300"/><path d="M5 5.500h3M5 8.500h3" stroke="#f0504c" stroke-width="1.200"/></svg>
<div class="t " style="left:41px;top:827px;font-size:12px;letter-spacing:-0.62px;color:#d8d8d8">2026.01.21 17:18:01</div>
<div class="t r " style="left:13px;width:300px;top:827px;font-size:12px;letter-spacing:-0.1px;color:#d8d8d8">xauusdm</div>
<div class="t r " style="left:120px;width:300px;top:827px;font-size:12px;letter-spacing:-0.62px;color:#d8d8d8">763583363</div>
<div class="t r " style="left:211px;width:300px;top:827px;font-size:12px;letter-spacing:-0.1px;color:#d8d8d8">sell</div>
<div class="t r " style="left:364px;width:300px;top:827px;font-size:12px;letter-spacing:-0.62px;color:#d8d8d8">0.05</div>
<div class="t r " style="left:517px;width:300px;top:827px;font-size:12px;letter-spacing:-0.62px;color:#d8d8d8">4820.472</div>
<div class="t r " style="left:670px;width:300px;top:827px;font-size:12px;letter-spacing:-0.62px;color:#d8d8d8">4819.972</div>
<div class="t r " style="left:823px;width:300px;top:827px;font-size:12px;letter-spacing:-0.62px;color:#d8d8d8">4778.668</div>
<div class="t r " style="left:963px;width:300px;top:827px;font-size:12px;letter-spacing:-0.62px;color:#d8d8d8">2026.01.21 17:19:07</div>
<div class="t r " style="left:1116px;width:300px;top:827px;font-size:12px;letter-spacing:-0.62px;color:#d8d8d8">4819.972</div>
<div class="t r " style="left:1485px;width:300px;top:827px;font-size:12px;letter-spacing:-0.62px;color:#2f8ff0">2.50</div>
<div class="t r " style="left:1585px;width:300px;top:827px;font-size:12px;letter-spacing:-0.5px;color:#2f8ff0">0.01 %</div>
<div class="a" style="left:20px;top:844px;width:1869px;height:19px;background:#2b2b2b;"></div>
<div class="a" style="left:20px;top:863px;width:1869px;height:1px;background:#474747;"></div>
<div class="a" style="left:821px;top:844px;width:152px;height:20px;background:#7f1c23;"></div>
<div class="a" style="left:821px;top:863px;width:152px;height:1px;background:#484848;"></div>
<svg width="12" height="17" style="left:23px;top:845px" viewBox="0 0 12 17"><rect x="1.600" y="1.600" width="9.800" height="13.800" rx="2" fill="none" stroke="#f0504c" stroke-width="1.300"/><path d="M5 5.500h3M5 8.500h3" stroke="#f0504c" stroke-width="1.200"/></svg>
<div class="t " style="left:41px;top:847px;font-size:12px;letter-spacing:-0.62px;color:#d8d8d8">2026.01.21 17:26:00</div>
<div class="t r " style="left:13px;width:300px;top:847px;font-size:12px;letter-spacing:-0.1px;color:#d8d8d8">xauusdm</div>
<div class="t r " style="left:120px;width:300px;top:847px;font-size:12px;letter-spacing:-0.62px;color:#d8d8d8">763675029</div>
<div class="t r " style="left:211px;width:300px;top:847px;font-size:12px;letter-spacing:-0.1px;color:#d8d8d8">sell</div>
<div class="t r " style="left:364px;width:300px;top:847px;font-size:12px;letter-spacing:-0.62px;color:#d8d8d8">0.06</div>
<div class="t r " style="left:517px;width:300px;top:847px;font-size:12px;letter-spacing:-0.62px;color:#d8d8d8">4822.448</div>
<div class="t r " style="left:670px;width:300px;top:847px;font-size:12px;letter-spacing:-0.62px;color:#d8d8d8">4818.571</div>
<div class="t r " style="left:823px;width:300px;top:847px;font-size:12px;letter-spacing:-0.62px;color:#d8d8d8">4781.885</div>
<div class="t r " style="left:963px;width:300px;top:847px;font-size:12px;letter-spacing:-0.62px;color:#d8d8d8">2026.01.21 17:27:13</div>
<div class="t r " style="left:1116px;width:300px;top:847px;font-size:12px;letter-spacing:-0.62px;color:#d8d8d8">4818.571</div>
<div class="t r " style="left:1485px;width:300px;top:847px;font-size:12px;letter-spacing:-0.62px;color:#2f8ff0">23.26</div>
<div class="t r " style="left:1585px;width:300px;top:847px;font-size:12px;letter-spacing:-0.5px;color:#2f8ff0">0.08 %</div>
<div class="a" style="left:20px;top:864px;width:1869px;height:19px;background:#343434;"></div>
<div class="a" style="left:20px;top:883px;width:1869px;height:1px;background:#474747;"></div>
<div class="a" style="left:821px;top:864px;width:152px;height:20px;background:#7f1c23;"></div>
<div class="a" style="left:821px;top:883px;width:152px;height:1px;background:#484848;"></div>
<svg width="12" height="17" style="left:23px;top:865px" viewBox="0 0 12 17"><rect x="1.600" y="1.600" width="9.800" height="13.800" rx="2" fill="none" stroke="#f0504c" stroke-width="1.300"/><path d="M5 5.500h3M5 8.500h3" stroke="#f0504c" stroke-width="1.200"/></svg>
<div class="t " style="left:41px;top:867px;font-size:12px;letter-spacing:-0.62px;color:#d8d8d8">2026.01.21 17:31:00</div>
<div class="t r " style="left:13px;width:300px;top:867px;font-size:12px;letter-spacing:-0.1px;color:#d8d8d8">xauusdm</div>
<div class="t r " style="left:120px;width:300px;top:867px;font-size:12px;letter-spacing:-0.62px;color:#d8d8d8">763746117</div>
<div class="t r " style="left:211px;width:300px;top:867px;font-size:12px;letter-spacing:-0.1px;color:#d8d8d8">sell</div>
<div class="t r " style="left:364px;width:300px;top:867px;font-size:12px;letter-spacing:-0.62px;color:#d8d8d8">0.06</div>
<div class="t r " style="left:517px;width:300px;top:867px;font-size:12px;letter-spacing:-0.62px;color:#d8d8d8">4814.984</div>
<div class="t r " style="left:670px;width:300px;top:867px;font-size:12px;letter-spacing:-0.62px;color:#d8d8d8">4810.009</div>
<div class="t r " style="left:823px;width:300px;top:867px;font-size:12px;letter-spacing:-0.62px;color:#d8d8d8">4775.983</div>
<div class="t r " style="left:963px;width:300px;top:867px;font-size:12px;letter-spacing:-0.62px;color:#d8d8d8">2026.01.21 17:31:53</div>
<div class="t r " style="left:1116px;width:300px;top:867px;font-size:12px;letter-spacing:-0.62px;color:#d8d8d8">4810.009</div>
<div class="t r " style="left:1485px;width:300px;top:867px;font-size:12px;letter-spacing:-0.62px;color:#2f8ff0">29.85</div>
<div class="t r " style="left:1585px;width:300px;top:867px;font-size:12px;letter-spacing:-0.5px;color:#2f8ff0">0.10 %</div>
<div class="a" style="left:20px;top:884px;width:1869px;height:19px;background:#2b2b2b;"></div>
<div class="a" style="left:20px;top:903px;width:1869px;height:1px;background:#474747;"></div>
<div class="a" style="left:821px;top:884px;width:152px;height:20px;background:#7f1c23;"></div>
<div class="a" style="left:821px;top:903px;width:152px;height:1px;background:#484848;"></div>
<svg width="12" height="17" style="left:23px;top:885px" viewBox="0 0 12 17"><rect x="1.600" y="1.600" width="9.800" height="13.800" rx="2" fill="none" stroke="#f0504c" stroke-width="1.300"/><path d="M5 5.500h3M5 8.500h3" stroke="#f0504c" stroke-width="1.200"/></svg>
<div class="t " style="left:41px;top:887px;font-size:12px;letter-spacing:-0.62px;color:#d8d8d8">2026.01.21 17:31:00</div>
<div class="t r " style="left:13px;width:300px;top:887px;font-size:12px;letter-spacing:-0.1px;color:#d8d8d8">xauusdm</div>
<div class="t r " style="left:120px;width:300px;top:887px;font-size:12px;letter-spacing:-0.62px;color:#d8d8d8">763746533</div>
<div class="t r " style="left:211px;width:300px;top:887px;font-size:12px;letter-spacing:-0.1px;color:#d8d8d8">sell</div>
<div class="t r " style="left:364px;width:300px;top:887px;font-size:12px;letter-spacing:-0.62px;color:#d8d8d8">0.06</div>
<div class="t r " style="left:517px;width:300px;top:887px;font-size:12px;letter-spacing:-0.62px;color:#d8d8d8">4815.200</div>
<div class="t r " style="left:670px;width:300px;top:887px;font-size:12px;letter-spacing:-0.62px;color:#d8d8d8">4810.054</div>
<div class="t r " style="left:823px;width:300px;top:887px;font-size:12px;letter-spacing:-0.62px;color:#d8d8d8">4775.579</div>
<div class="t r " style="left:963px;width:300px;top:887px;font-size:12px;letter-spacing:-0.62px;color:#d8d8d8">2026.01.21 17:32:10</div>
<div class="t r " style="left:1116px;width:300px;top:887px;font-size:12px;letter-spacing:-0.62px;color:#d8d8d8">4810.054</div>
<div class="t r " style="left:1485px;width:300px;top:887px;font-size:12px;letter-spacing:-0.62px;color:#2f8ff0">30.88</div>
<div class="t r " style="left:1585px;width:300px;top:887px;font-size:12px;letter-spacing:-0.5px;color:#2f8ff0">0.11 %</div>
<div class="a" style="left:20px;top:904px;width:1869px;height:19px;background:#343434;"></div>
<div class="a" style="left:20px;top:923px;width:1869px;height:1px;background:#474747;"></div>
<div class="a" style="left:821px;top:904px;width:152px;height:20px;background:#7f1c23;"></div>
<div class="a" style="left:821px;top:923px;width:152px;height:1px;background:#484848;"></div>
<svg width="12" height="17" style="left:23px;top:905px" viewBox="0 0 12 17"><rect x="1.600" y="1.600" width="9.800" height="13.800" rx="2" fill="none" stroke="#f0504c" stroke-width="1.300"/><path d="M5 5.500h3M5 8.500h3" stroke="#f0504c" stroke-width="1.200"/></svg>
<div class="t " style="left:41px;top:907px;font-size:12px;letter-spacing:-0.62px;color:#d8d8d8">2026.01.21 17:43:00</div>
<div class="t r " style="left:13px;width:300px;top:907px;font-size:12px;letter-spacing:-0.1px;color:#d8d8d8">xauusdm</div>
<div class="t r " style="left:120px;width:300px;top:907px;font-size:12px;letter-spacing:-0.62px;color:#d8d8d8">763931377</div>
<div class="t r " style="left:211px;width:300px;top:907px;font-size:12px;letter-spacing:-0.1px;color:#d8d8d8">sell</div>
<div class="t r " style="left:364px;width:300px;top:907px;font-size:12px;letter-spacing:-0.62px;color:#d8d8d8">0.05</div>
<div class="t r " style="left:517px;width:300px;top:907px;font-size:12px;letter-spacing:-0.62px;color:#d8d8d8">4809.054</div>
<div class="t r " style="left:670px;width:300px;top:907px;font-size:12px;letter-spacing:-0.62px;color:#d8d8d8">4808.554</div>
<div class="t r " style="left:823px;width:300px;top:907px;font-size:12px;letter-spacing:-0.62px;color:#d8d8d8">4759.546</div>
<div class="t r " style="left:963px;width:300px;top:907px;font-size:12px;letter-spacing:-0.62px;color:#d8d8d8">2026.01.21 17:44:00</div>
<div class="t r " style="left:1116px;width:300px;top:907px;font-size:12px;letter-spacing:-0.62px;color:#d8d8d8">4808.554</div>
<div class="t r " style="left:1485px;width:300px;top:907px;font-size:12px;letter-spacing:-0.62px;color:#2f8ff0">2.50</div>
<div class="t r " style="left:1585px;width:300px;top:907px;font-size:12px;letter-spacing:-0.5px;color:#2f8ff0">0.01 %</div>
<div class="a" style="left:179px;top:502px;width:1px;height:422px;background:#454545;"></div>
<div class="a" style="left:316px;top:502px;width:1px;height:422px;background:#454545;"></div>
<div class="a" style="left:423px;top:502px;width:1px;height:422px;background:#454545;"></div>
<div class="a" style="left:514px;top:502px;width:1px;height:422px;background:#454545;"></div>
<div class="a" style="left:667px;top:502px;width:1px;height:422px;background:#454545;"></div>
<div class="a" style="left:820px;top:502px;width:1px;height:422px;background:#454545;"></div>
<div class="a" style="left:973px;top:502px;width:1px;height:422px;background:#454545;"></div>
<div class="a" style="left:1126px;top:502px;width:1px;height:422px;background:#454545;"></div>
<div class="a" style="left:1266px;top:502px;width:1px;height:422px;background:#454545;"></div>
<div class="a" style="left:1419px;top:502px;width:1px;height:422px;background:#454545;"></div>
<div class="a" style="left:1788px;top:502px;width:1px;height:422px;background:#454545;"></div>
<div class="a" style="left:20px;top:923px;width:1869px;height:21px;background:#3d3d3d;"></div>
<svg width="13" height="13" style="left:23px;top:927px" viewBox="0 0 13 13"><circle cx="6.500" cy="6.500" r="5" fill="none" stroke="#c8c8c8" stroke-width="1.100"/><path d="M6.500 4v5M4 6.500h5" stroke="#d0d0d0" stroke-width="1" shape-rendering="crispEdges"/></svg>
<div class="t " style="left:41px;top:927px;font-size:12px;font-weight:bold;letter-spacing:-0.08px;color:#d0d0d0">Profit: 1 049.46&nbsp; Credit: 0.00&nbsp; Deposit: 500.00&nbsp; Withdrawal: 0.00&nbsp; Balance: 1 549.46</div>
<div class="t r " style="left:1485px;width:300px;top:927px;font-size:12px;font-weight:bold;letter-spacing:-0.08px;color:#d0d0d0">1 049.46</div>
<div class="a" style="left:19px;top:944px;width:1870px;height:12px;background:#2b2b2b;"></div>
<div class="a" style="left:1889px;top:500px;width:17px;height:456px;background:#1f1f1f;"></div>
<div class="a" style="left:1890px;top:853px;width:16px;height:86px;background:#4d4d4d;"></div>
<svg width="12" height="8" style="left:1892px;top:506px" viewBox="0 0 12 8"><path d="M1.500 6.500l4.500-4.500 4.500 4.500" stroke="#8a8a8a" stroke-width="1.500" fill="none"/></svg>
<svg width="12" height="8" style="left:1892px;top:943px" viewBox="0 0 12 8"><path d="M1.500 1.500l4.500 4.500 4.500-4.500" stroke="#8a8a8a" stroke-width="1.500" fill="none"/></svg>
<div class="t" style="left:10px;top:957px;transform:translate(-50%,-50%) rotate(-90deg);color:#e6e6e6;font-size:12px;letter-spacing:-0.3px">Toolbox</div>
<div class="a" style="left:19px;top:956px;width:1887px;height:27px;background:#2b2b2b;"></div>
<svg width="1913" height="30" style="left:0;top:955px" viewBox="0 955 1913 30" fill="none"><path d="M20 956.500h121.500v19h57v-19h1707.500" stroke="#c4c4c4" stroke-width="1"/><path d="M2 982.500h1904" stroke="#b4b4b4" stroke-width="1"/><path d="M73.500 960v15" stroke="#d0d0d0" stroke-width="1"/><path d="M266.500 960v15" stroke="#d0d0d0" stroke-width="1"/><path d="M329.500 960v15" stroke="#d0d0d0" stroke-width="1"/><path d="M396.500 960v15" stroke="#d0d0d0" stroke-width="1"/><path d="M468.500 960v15" stroke="#d0d0d0" stroke-width="1"/><path d="M518.500 960v15" stroke="#d0d0d0" stroke-width="1"/><path d="M577.500 960v15" stroke="#d0d0d0" stroke-width="1"/><path d="M652.500 960v15" stroke="#d0d0d0" stroke-width="1"/><path d="M710.500 960v15" stroke="#d0d0d0" stroke-width="1"/><path d="M1738 964.500a8 8 0 0 1 0 9" stroke="#707070" stroke-width="1.200"/><path d="M1581.500 984v2M1785.500 984v2" stroke="#6a6a6a" stroke-width="1"/><path d="M1799.500 971a3 3 0 0 1 .3-6a4.300 4.300 0 0 1 8.200-.8a3.300 3.300 0 0 1-.2 6.800z" stroke="#2f7fe6" stroke-width="1.300" fill="#0b2340"/><path d="M1803.500 971v3M1797 975h13" stroke="#2f7fe6" stroke-width="1.200"/><rect x="1850.500" y="963.500" width="10" height="10" rx="1.500" stroke="#2f7fe6" stroke-width="1.300" fill="#0b2340"/><path d="M1853 961v2.500M1855.500 961v2.500M1858 961v2.500M1853 973.500v2.500M1855.500 973.500v2.500M1858 973.500v2.500M1848 966h2.500M1848 968.500h2.500M1848 971h2.500M1860.500 966h2.500M1860.500 968.500h2.500M1860.500 971h2.500" stroke="#2f7fe6" stroke-width="1"/></svg>
<div class="t " style="left:35px;top:959px;font-size:12px;letter-spacing:-0.3px;color:#e6e6e6">Trade</div>
<div class="t " style="left:83px;top:959px;font-size:12px;letter-spacing:-0.3px;color:#e6e6e6">Exposure</div>
<div class="t " style="left:209px;top:959px;font-size:12px;letter-spacing:-0.3px;color:#e6e6e6">News</div>
<div class="t " style="left:276px;top:959px;font-size:12px;letter-spacing:-0.3px;color:#e6e6e6">Mailbox</div>
<div class="t " style="left:339px;top:959px;font-size:12px;letter-spacing:-0.3px;color:#e6e6e6">Calendar</div>
<div class="t " style="left:406px;top:959px;font-size:12px;letter-spacing:-0.3px;color:#e6e6e6">Company</div>
<div class="t " style="left:478px;top:959px;font-size:12px;letter-spacing:-0.3px;color:#e6e6e6">Alerts</div>
<div class="t " style="left:528px;top:959px;font-size:12px;letter-spacing:-0.3px;color:#e6e6e6">Articles</div>
<div class="t " style="left:587px;top:959px;font-size:12px;letter-spacing:-0.3px;color:#e6e6e6">Code Base</div>
<div class="t " style="left:662px;top:959px;font-size:12px;letter-spacing:-0.3px;color:#e6e6e6">Experts</div>
<div class="t " style="left:720px;top:959px;font-size:12px;letter-spacing:-0.3px;color:#e6e6e6">Journal</div>
<div class="t " style="left:151px;top:959px;font-size:12px;letter-spacing:-0.3px;color:#c0c0c0">History</div>
<div class="t " style="left:239px;top:964px;font-size:9.5px;letter-spacing:-0.2px;color:#f0202c">99</div>
<div class="t " style="left:1746px;top:962px;font-size:12px;letter-spacing:-0.3px;color:#808080">Signals</div>
<div class="t " style="left:1815px;top:962px;font-size:12px;letter-spacing:-1.3px;color:#e6e6e6">VPS</div>
<div class="t " style="left:1867px;top:962px;font-size:12px;letter-spacing:-0.3px;color:#e6e6e6">Tester</div>
<div class="a" style="left:1617px;top:891px;width:120px;height:95px;background:#cacaca;"></div>
<svg width="120" height="95" style="left:1617px;top:891px" viewBox="1617 891 120 95"><rect x="1629" y="903" width="16" height="16" rx="3" fill="#2196e8"/><path d="M1629.500 914l3 4.500h6z" fill="#e8a030"/><path d="M1631 917.500l3 1.500h5" stroke="#60c060" stroke-width="1" fill="none"/><rect x="1632.500" y="905.500" width="8" height="6" rx="1" fill="none" stroke="#d8f0ff" stroke-width="1"/><path d="M1634 908h5M1634 910h3M1636 913.500h6M1638 915.500h4" stroke="#d8f0ff" stroke-width=".9" fill="none"/><path d="M1669 918c2-8 8-13 15-14c-1 6-6 11-13 13z" fill="#a070e0"/><path d="M1669 918l12-11" stroke="#7040c0" stroke-width="1" fill="none"/><path d="M1716.500 903l7 2.500v5c0 4-3 7-7 8.500c-4-1.500-7-4.500-7-8.500v-5z" fill="#fff" stroke="#222" stroke-width="1.300"/><path d="M1716.500 904v15M1710 910.500h13" stroke="#222" stroke-width="1.300"/><path d="M1721 910.500l4.500 8.500h-9z" fill="#f8b800"/><path d="M1721 913.500v3M1721 917.300v.8" stroke="#222" stroke-width="1.100"/><path d="M1632 955a3.500 3.500 0 0 1 .5-7a5 5 0 0 1 9.500 0a3.500 3.500 0 0 1 0 7z" fill="#d8d8d8" stroke="#444" stroke-width="1.100"/><path d="M1630 944l14 14" stroke="#333" stroke-width="1.400"/><circle cx="1676.800" cy="951" r="8" fill="#e33b2e"/><path d="M1676.800 951l-6.900 4a8 8 0 0 0 6.900 4l3.500-6z" fill="#2da94f"/><path d="M1676.800 951l3.500 2-3.500 6a8 8 0 0 0 6.900-12h-6.900z" fill="#fdd308"/><circle cx="1676.800" cy="951" r="3.800" fill="#fff"/><circle cx="1676.800" cy="951" r="3" fill="#4285f4"/><rect x="1709" y="943" width="16" height="16" rx="2.500" fill="#0a1024"/><rect x="1711" y="945" width="12" height="12" rx="2" fill="none" stroke="#9aa8c8" stroke-width="1.100" stroke-dasharray="4 3.500" stroke-dashoffset="2"/><path d="M1717 946.500l4.500 9h-9z" fill="#e83050"/><path d="M1717 946.500l2.300 4.500h-4.600z" fill="#f06020"/><path d="M1714.700 951l-2.200 4.500h3.500z" fill="#b040e0"/><path d="M1719.300 951l2.200 4.500h-3.500z" fill="#30b0f0"/><path d="M1717 951.500l1.800 4h-3.600z" fill="#0a1024"/><ellipse cx="1637" cy="987" rx="5" ry="3" fill="none" stroke="#333" stroke-width="1.200"/></svg>
</body></html>
